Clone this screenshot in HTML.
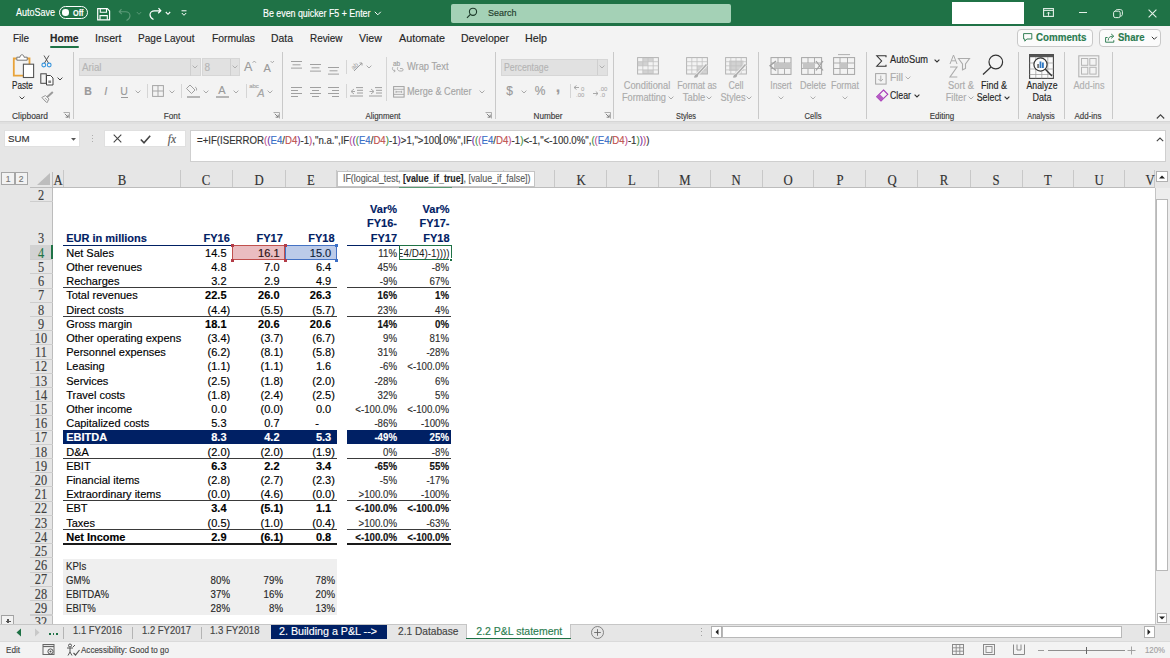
<!DOCTYPE html>
<html><head><meta charset="utf-8"><style>
html,body{margin:0;padding:0;width:1170px;height:658px;overflow:hidden;background:#fff;}
body{position:relative;font-family:'Liberation Sans', sans-serif;}
.t{position:absolute;white-space:pre;line-height:20px;height:20px;-webkit-text-stroke:0.15px currentColor;}
.b{position:absolute;box-sizing:border-box;}
.s{position:absolute;overflow:visible;}
</style></head><body>
<div class="b" style="left:0px;top:0px;width:1170px;height:26px;background:#1f7246"></div>
<div class="t" style="left:15.9px;top:2.8000000000000007px;font-size:10px;color:#ffffff;font-weight:normal;font-family:'Liberation Sans', sans-serif;transform:scaleX(0.8991);transform-origin:0 50%;">AutoSave</div>
<div class="b" style="left:59px;top:6.3px;width:29.2px;height:12.6px;border:1.2px solid #fff;border-radius:7px"></div>
<div class="b" style="left:62.4px;top:9.4px;width:6.4px;height:6.4px;border-radius:50%;background:#fff"></div>
<div class="t" style="left:73.3px;top:2.8000000000000007px;font-size:8.5px;color:#ffffff;font-weight:bold;font-family:'Liberation Sans', sans-serif;transform:scaleX(0.8550);transform-origin:0 50%;">Off</div>
<svg class="s" style="left:97px;top:7.5px;" width="14" height="13" viewBox="0 0 14 13"><path d="M0.7 0.7 H10.3 L12.6 3 V11.8 H0.7 Z" fill="none" stroke="#fff" stroke-width="1.2"/><path d="M3.3 0.7 V4.3 H9.5 V0.7" fill="none" stroke="#fff" stroke-width="1.1"/><path d="M3 11.8 V7.6 H10.3 V11.8" fill="none" stroke="#fff" stroke-width="1.1"/></svg>
<svg class="s" style="left:118px;top:7.5px;" width="14" height="13" viewBox="0 0 14 13"><path d="M3.5 1.2 L1.2 3.8 L3.8 6.2 M1.4 3.8 H7.5 C10 3.8 12 5.5 12 7.8 C12 10 10.5 11.5 8.5 12.5" fill="none" stroke="#5e9b79" stroke-width="1.1"/></svg>
<svg class="s" style="left:135.5px;top:10.5px;" width="6" height="5" viewBox="0 0 6 5"><path d="M0.8 1 L3 3.3 L5.2 1" fill="none" stroke="#5e9b79" stroke-width="0.9"/></svg>
<svg class="s" style="left:147.8px;top:7.3px;" width="14" height="13" viewBox="0 0 14 13"><path d="M10.5 1.2 L12.8 3.8 L10.2 6.2 M12.6 3.8 H6.5 C4 3.8 2 5.5 2 7.8 C2 10 3.5 11.5 5.5 12.5" fill="none" stroke="#fff" stroke-width="1.2"/></svg>
<svg class="s" style="left:164.5px;top:10.5px;" width="6" height="5" viewBox="0 0 6 5"><path d="M0.8 1 L3 3.3 L5.2 1" fill="none" stroke="#fff" stroke-width="1.1"/></svg>
<svg class="s" style="left:180.5px;top:9.5px;" width="6" height="7" viewBox="0 0 6 7"><path d="M0.5 0.8 H5.5" stroke="#fff" stroke-width="1"/><path d="M0.8 3 L3 5.3 L5.2 3" fill="none" stroke="#fff" stroke-width="1"/></svg>
<div class="t" style="left:263.4px;top:3.5px;font-size:10px;color:#ffffff;font-weight:normal;font-family:'Liberation Sans', sans-serif;transform:scaleX(0.8850);transform-origin:0 50%;">Be even quicker F5 + Enter</div>
<svg class="s" style="left:373.5px;top:11px;" width="8" height="5" viewBox="0 0 8 5"><path d="M0.8 0.8 L3.8 3.8 L6.8 0.8" fill="none" stroke="#fff" stroke-width="1"/></svg>
<div class="b" style="left:450.8px;top:3.5px;width:280.5px;height:19px;background:#a4d1b6;border-radius:2px"></div>
<svg class="s" style="left:465.5px;top:6.5px;" width="12" height="12" viewBox="0 0 12 12"><circle cx="7" cy="4.8" r="3.6" fill="none" stroke="#1e3b2b" stroke-width="1.1"/><path d="M4.4 7.4 L1 10.8" stroke="#1e3b2b" stroke-width="1.2"/></svg>
<div class="t" style="left:488.2px;top:3.4000000000000004px;font-size:9.6px;color:#1e3b2b;font-weight:normal;font-family:'Liberation Sans', sans-serif;transform:scaleX(0.9373);transform-origin:0 50%;">Search</div>
<div class="b" style="left:952.3px;top:2px;width:71.7px;height:22px;background:#fff"></div>
<svg class="s" style="left:1042.5px;top:8.2px;" width="11" height="9" viewBox="0 0 11 9"><rect x="0.6" y="0.6" width="9.8" height="7.8" fill="none" stroke="#e4f1e8" stroke-width="1.1"/><path d="M0.6 2.4 H10.4" stroke="#e4f1e8" stroke-width="1"/><path d="M5.5 7.8 V4.2 M4 5.6 L5.5 4.1 L7 5.6" fill="none" stroke="#e4f1e8" stroke-width="1"/></svg>
<div class="b" style="left:1078.5px;top:11.8px;width:8.3px;height:1.1px;background:#e4f1e8"></div>
<svg class="s" style="left:1113px;top:8.8px;" width="10" height="9" viewBox="0 0 10 9"><rect x="0.6" y="2.2" width="6.6" height="6.4" rx="1.6" fill="none" stroke="#e4f1e8" stroke-width="1"/><path d="M2.4 2.2 C2.6 1.2 3.2 0.6 4.2 0.6 H7.4 C8.6 0.6 9.4 1.4 9.4 2.6 V5.4 C9.4 6.4 8.8 7 7.4 7.2" fill="none" stroke="#e4f1e8" stroke-width="1"/></svg>
<svg class="s" style="left:1147.8px;top:8.7px;" width="9" height="9" viewBox="0 0 9 9"><path d="M0.6 0.6 L8.4 8.4 M8.4 0.6 L0.6 8.4" stroke="#e4f1e8" stroke-width="1.1"/></svg>
<div class="b" style="left:0px;top:26px;width:1170px;height:96px;background:#f3f3f3"></div>
<div class="t" style="left:12.5px;top:27.799999999999997px;font-size:10.5px;color:#262626;font-weight:normal;font-family:'Liberation Sans', sans-serif;transform:scaleX(0.9455);transform-origin:0 50%;">File</div>
<div class="t" style="left:50.2px;top:27.799999999999997px;font-size:10.5px;color:#262626;font-weight:bold;font-family:'Liberation Sans', sans-serif;transform:scaleX(0.9764);transform-origin:0 50%;">Home</div>
<div class="t" style="left:94.7px;top:27.799999999999997px;font-size:10.5px;color:#262626;font-weight:normal;font-family:'Liberation Sans', sans-serif;transform:scaleX(1.0089);transform-origin:0 50%;">Insert</div>
<div class="t" style="left:138.2px;top:27.799999999999997px;font-size:10.5px;color:#262626;font-weight:normal;font-family:'Liberation Sans', sans-serif;transform:scaleX(0.9581);transform-origin:0 50%;">Page Layout</div>
<div class="t" style="left:211.7px;top:27.799999999999997px;font-size:10.5px;color:#262626;font-weight:normal;font-family:'Liberation Sans', sans-serif;transform:scaleX(0.9825);transform-origin:0 50%;">Formulas</div>
<div class="t" style="left:270.7px;top:27.799999999999997px;font-size:10.5px;color:#262626;font-weight:normal;font-family:'Liberation Sans', sans-serif;transform:scaleX(0.9915);transform-origin:0 50%;">Data</div>
<div class="t" style="left:310.2px;top:27.799999999999997px;font-size:10.5px;color:#262626;font-weight:normal;font-family:'Liberation Sans', sans-serif;transform:scaleX(0.9437);transform-origin:0 50%;">Review</div>
<div class="t" style="left:359.4px;top:27.799999999999997px;font-size:10.5px;color:#262626;font-weight:normal;font-family:'Liberation Sans', sans-serif;transform:scaleX(1.0098);transform-origin:0 50%;">View</div>
<div class="t" style="left:398.7px;top:27.799999999999997px;font-size:10.5px;color:#262626;font-weight:normal;font-family:'Liberation Sans', sans-serif;transform:scaleX(1.0233);transform-origin:0 50%;">Automate</div>
<div class="t" style="left:460.7px;top:27.799999999999997px;font-size:10.5px;color:#262626;font-weight:normal;font-family:'Liberation Sans', sans-serif;transform:scaleX(1.0026);transform-origin:0 50%;">Developer</div>
<div class="t" style="left:524.7px;top:27.799999999999997px;font-size:10.5px;color:#262626;font-weight:normal;font-family:'Liberation Sans', sans-serif;transform:scaleX(1.0181);transform-origin:0 50%;">Help</div>
<div class="b" style="left:50px;top:45.5px;width:29px;height:2.6px;background:#1f7246;border-radius:1px"></div>
<div class="b" style="left:1017px;top:28.5px;width:76px;height:18.5px;background:#fbfbfb;border:1px solid #c8c8c8;border-radius:4px"></div>
<svg class="s" style="left:1023px;top:33px;" width="10" height="10" viewBox="0 0 10 10"><path d="M0.6 0.6 H8.8 V6 H3.8 L1.8 8.2 V6 H0.6 Z" fill="none" stroke="#2a7a4e" stroke-width="0.95"/></svg>
<div class="t" style="left:1035.7px;top:28.0px;font-size:10px;color:#2a7a4e;font-weight:bold;font-family:'Liberation Sans', sans-serif;transform:scaleX(0.9770);transform-origin:0 50%;">Comments</div>
<div class="b" style="left:1099px;top:28.5px;width:61.5px;height:18.5px;background:#fbfbfb;border:1px solid #c8c8c8;border-radius:4px"></div>
<svg class="s" style="left:1105px;top:32.5px;" width="11" height="10" viewBox="0 0 11 10"><path d="M2.6 4.5 H0.6 V9.2 H8.8 V7.2" fill="none" stroke="#2a7a4e" stroke-width="0.95"/><path d="M3.2 7.5 C3.2 4.5 5 3.2 7.8 3.2 M6.2 1 L8.8 3.2 L6.2 5.4" fill="none" stroke="#2a7a4e" stroke-width="0.95"/></svg>
<div class="t" style="left:1117.5px;top:28.0px;font-size:10px;color:#2a7a4e;font-weight:bold;font-family:'Liberation Sans', sans-serif;transform:scaleX(0.9533);transform-origin:0 50%;">Share</div>
<svg class="s" style="left:1150.5px;top:36px;" width="7" height="5" viewBox="0 0 7 5"><path d="M0.8 0.8 L3.3 3.3 L5.8 0.8" fill="none" stroke="#333" stroke-width="1"/></svg>
<div class="b" style="left:72.5px;top:52px;width:1px;height:66.5px;background:#c9c9c9"></div>
<div class="b" style="left:282.0px;top:52px;width:1px;height:66.5px;background:#c9c9c9"></div>
<div class="b" style="left:494.5px;top:52px;width:1px;height:66.5px;background:#c9c9c9"></div>
<div class="b" style="left:613.0px;top:52px;width:1px;height:66.5px;background:#c9c9c9"></div>
<div class="b" style="left:758.3px;top:52px;width:1px;height:66.5px;background:#c9c9c9"></div>
<div class="b" style="left:866.0px;top:52px;width:1px;height:66.5px;background:#c9c9c9"></div>
<div class="b" style="left:1017.7px;top:52px;width:1px;height:66.5px;background:#c9c9c9"></div>
<div class="b" style="left:1064.2px;top:52px;width:1px;height:66.5px;background:#c9c9c9"></div>
<div class="b" style="left:1111.5px;top:52px;width:1px;height:66.5px;background:#c9c9c9"></div>
<svg class="s" style="left:12px;top:54px;" width="24" height="25" viewBox="0 0 24 25"><path d="M4.5 4.5 H1.8 V21.6 H17.5 V4.5 H15" fill="none" stroke="#e8a33a" stroke-width="1.8"/><path d="M4.8 6.2 V3.2 H8 C8 1.5 9 0.8 10 0.8 C11 0.8 12 1.5 12 3.2 H15.2 V6.2 Z" fill="#fff" stroke="#777" stroke-width="1"/><rect x="11.4" y="10.2" width="10.2" height="13.3" fill="#fff" stroke="#555" stroke-width="1.1"/></svg>
<div class="t" style="left:12.1px;top:76.2px;font-size:10px;color:#262626;font-weight:normal;font-family:'Liberation Sans', sans-serif;transform:scaleX(0.8132);transform-origin:0 50%;">Paste</div>
<svg class="s" style="left:18.5px;top:95.5px;" width="6" height="4" viewBox="0 0 6 4"><path d="M0.6 0.6 L3 3 L5.4 0.6" fill="none" stroke="#444" stroke-width="1"/></svg>
<svg class="s" style="left:41px;top:54.5px;" width="11" height="13" viewBox="0 0 11 13"><path d="M3 0.5 L7.5 8 M8 0.5 L3.5 8" stroke="#444" stroke-width="0.9"/><circle cx="2.8" cy="10" r="1.9" fill="none" stroke="#3a96dd" stroke-width="1.1"/><circle cx="8.2" cy="10" r="1.9" fill="none" stroke="#3a96dd" stroke-width="1.1"/></svg>
<svg class="s" style="left:39.5px;top:72.5px;" width="15" height="13" viewBox="0 0 15 13"><rect x="0.8" y="0.8" width="5.5" height="9.5" fill="none" stroke="#444" stroke-width="1"/><path d="M6.5 2.5 H10.5 L13 5 V12 H6.5 Z" fill="#fff" stroke="#444" stroke-width="1"/><rect x="8.3" y="7.5" width="2.8" height="2.5" fill="#888"/></svg>
<svg class="s" style="left:57.2px;top:77.3px;" width="6" height="4" viewBox="0 0 6 4"><path d="M0.6 0.6 L3 3 L5.4 0.6" fill="none" stroke="#444" stroke-width="1"/></svg>
<svg class="s" style="left:40.5px;top:90.5px;" width="13" height="13" viewBox="0 0 13 13"><path d="M0.8 6.5 L4.5 4.5 L8 8 L6 11.8 Z" fill="none" stroke="#9b9b9b" stroke-width="1"/><path d="M2.5 8.5 L5 11 M4 7 L6.5 9.5" stroke="#9b9b9b" stroke-width="0.8"/><path d="M6 6.3 L11.8 1" stroke="#9b9b9b" stroke-width="2"/></svg>
<div class="t" style="left:-170.4px;width:400px;text-align:center;top:105.8px;font-size:8.8px;color:#3b3b3b;font-weight:normal;font-family:'Liberation Sans', sans-serif;transform:scaleX(0.9560);transform-origin:50% 50%;">Clipboard</div>
<svg class="s" style="left:63.0px;top:112.0px;" width="7" height="7" viewBox="0 0 7 7"><path d="M0.5 0.5 H6.5 V6.5" fill="none" stroke="#9a9a9a" stroke-width="0.8"/><path d="M1.8 1.8 L5.2 5.2 M2.6 5.2 H5.2 V2.6" fill="none" stroke="#777" stroke-width="0.9"/></svg>
<div class="b" style="left:79px;top:58px;width:121.7px;height:17.8px;background:#e1e1e1;border:0.8px solid #d6d6d6"></div>
<div class="b" style="left:190px;top:58.5px;width:0.8px;height:17px;background:#cfcfcf"></div>
<div class="t" style="left:82px;top:58.0px;font-size:10px;color:#b5b5b5;font-weight:normal;font-family:'Liberation Sans', sans-serif;transform:scaleX(0.9742);transform-origin:0 50%;">Arial</div>
<svg class="s" style="left:192.3px;top:65.2px;" width="6" height="4" viewBox="0 0 6 4"><path d="M0.6 0.6 L3 3 L5.4 0.6" fill="none" stroke="#b0b0b0" stroke-width="1"/></svg>
<div class="b" style="left:202px;top:58px;width:38px;height:17.8px;background:#e1e1e1;border:0.8px solid #d6d6d6"></div>
<div class="b" style="left:230px;top:58.5px;width:0.8px;height:17px;background:#cfcfcf"></div>
<div class="t" style="left:204.5px;top:58.0px;font-size:10px;color:#b5b5b5;font-weight:normal;font-family:'Liberation Sans', sans-serif;">8</div>
<svg class="s" style="left:232.3px;top:65.2px;" width="6" height="4" viewBox="0 0 6 4"><path d="M0.6 0.6 L3 3 L5.4 0.6" fill="none" stroke="#b0b0b0" stroke-width="1"/></svg>
<div class="t" style="left:244px;top:56.8px;font-size:12.5px;color:#9a9a9a;font-weight:normal;font-family:'Liberation Sans', sans-serif;">A</div>
<svg class="s" style="left:251.5px;top:60px;" width="5" height="4" viewBox="0 0 5 4"><path d="M0.6 2.8 L2.3 1 L4 2.8" fill="none" stroke="#9a9a9a" stroke-width="0.8"/></svg>
<div class="t" style="left:263.5px;top:57.5px;font-size:11px;color:#9a9a9a;font-weight:normal;font-family:'Liberation Sans', sans-serif;">A</div>
<svg class="s" style="left:270px;top:60px;" width="5" height="4" viewBox="0 0 5 4"><path d="M0.6 1 L2.3 2.8 L4 1" fill="none" stroke="#9a9a9a" stroke-width="0.8"/></svg>
<div class="t" style="left:-112px;width:400px;text-align:center;top:81.0px;font-size:10.5px;color:#9a9a9a;font-weight:bold;font-family:'Liberation Sans', sans-serif;">B</div>
<div class="t" style="left:-94.3px;width:400px;text-align:center;top:81.0px;font-size:11px;color:#9a9a9a;font-weight:normal;font-family:'Liberation Sans', sans-serif;font-style:italic">I</div>
<div class="t" style="left:-76px;width:400px;text-align:center;top:80.5px;font-size:10.5px;color:#9a9a9a;font-weight:normal;font-family:'Liberation Sans', sans-serif;">U</div>
<div class="b" style="left:120.5px;top:96.6px;width:7px;height:0.9px;background:#9a9a9a"></div>
<svg class="s" style="left:135.2px;top:89.5px;" width="6" height="4" viewBox="0 0 6 4"><path d="M0.6 0.6 L3 3 L5.4 0.6" fill="none" stroke="#aaa" stroke-width="1"/></svg>
<div class="b" style="left:147px;top:84px;width:0.8px;height:14px;background:#d5d5d5"></div>
<svg class="s" style="left:152px;top:85px;" width="12" height="12" viewBox="0 0 12 12"><rect x="0.6" y="0.6" width="10.8" height="10.8" fill="none" stroke="#a5a5a5" stroke-width="1"/><path d="M6 0.6 V11.4 M0.6 6 H11.4" stroke="#a5a5a5" stroke-width="1"/></svg>
<svg class="s" style="left:168.5px;top:89.5px;" width="6" height="4" viewBox="0 0 6 4"><path d="M0.6 0.6 L3 3 L5.4 0.6" fill="none" stroke="#aaa" stroke-width="1"/></svg>
<div class="b" style="left:181.2px;top:84px;width:0.8px;height:14px;background:#d5d5d5"></div>
<svg class="s" style="left:186px;top:83px;" width="14" height="14" viewBox="0 0 14 14"><path d="M4 2 L9 7 L5.5 10.5 L0.5 5.5 Z" fill="none" stroke="#a0a0a0" stroke-width="1"/><path d="M9 4 C10 4.5 11 5 10.5 7.5" fill="none" stroke="#a0a0a0" stroke-width="0.9"/></svg>
<div class="b" style="left:186.5px;top:95.5px;width:13px;height:2.4px;background:#b5b5b5"></div>
<svg class="s" style="left:202.8px;top:89.5px;" width="6" height="4" viewBox="0 0 6 4"><path d="M0.6 0.6 L3 3 L5.4 0.6" fill="none" stroke="#aaa" stroke-width="1"/></svg>
<div class="t" style="left:22px;width:400px;text-align:center;top:80.0px;font-size:11px;color:#9a9a9a;font-weight:normal;font-family:'Liberation Sans', sans-serif;">A</div>
<div class="b" style="left:215.5px;top:95.5px;width:13px;height:2.4px;background:#b5b5b5"></div>
<svg class="s" style="left:233px;top:89.5px;" width="6" height="4" viewBox="0 0 6 4"><path d="M0.6 0.6 L3 3 L5.4 0.6" fill="none" stroke="#aaa" stroke-width="1"/></svg>
<div class="b" style="left:245.5px;top:84px;width:0.8px;height:14px;background:#d5d5d5"></div>
<div class="t" style="left:54px;width:400px;text-align:center;top:76.0px;font-size:6px;color:#a5a5a5;font-weight:normal;font-family:'Liberation Sans', sans-serif;">abc</div>
<div class="t" style="left:61px;width:400px;text-align:center;top:83.0px;font-size:11px;color:#a5a5a5;font-weight:normal;font-family:'Liberation Sans', sans-serif;font-style:italic">A</div>
<svg class="s" style="left:267.3px;top:89.5px;" width="6" height="4" viewBox="0 0 6 4"><path d="M0.6 0.6 L3 3 L5.4 0.6" fill="none" stroke="#aaa" stroke-width="1"/></svg>
<div class="t" style="left:-28.5px;width:400px;text-align:center;top:105.8px;font-size:8.8px;color:#3b3b3b;font-weight:normal;font-family:'Liberation Sans', sans-serif;transform:scaleX(0.9370);transform-origin:50% 50%;">Font</div>
<svg class="s" style="left:273.0px;top:112.0px;" width="7" height="7" viewBox="0 0 7 7"><path d="M0.5 0.5 H6.5 V6.5" fill="none" stroke="#9a9a9a" stroke-width="0.8"/><path d="M1.8 1.8 L5.2 5.2 M2.6 5.2 H5.2 V2.6" fill="none" stroke="#777" stroke-width="0.9"/></svg>
<svg class="s" style="left:291px;top:61px;" width="13" height="12" viewBox="0 0 13 12"><rect x="0" y="0.0" width="11" height="1" fill="#a0a0a0"/><rect x="1.5" y="3.3" width="8" height="1" fill="#a0a0a0"/><rect x="0" y="6.6" width="11" height="1" fill="#a0a0a0"/></svg>
<svg class="s" style="left:309.5px;top:63.5px;" width="13" height="12" viewBox="0 0 13 12"><rect x="0" y="0.0" width="11" height="1" fill="#a0a0a0"/><rect x="1.5" y="3.3" width="8" height="1" fill="#a0a0a0"/><rect x="0" y="6.6" width="11" height="1" fill="#a0a0a0"/></svg>
<svg class="s" style="left:328px;top:66.5px;" width="13" height="12" viewBox="0 0 13 12"><rect x="0" y="0.0" width="11" height="1" fill="#a0a0a0"/><rect x="1.5" y="3.3" width="8" height="1" fill="#a0a0a0"/><rect x="0" y="6.6" width="11" height="1" fill="#a0a0a0"/></svg>
<svg class="s" style="left:291px;top:86.5px;" width="13" height="12" viewBox="0 0 13 12"><rect x="0" y="0" width="11" height="1" fill="#a0a0a0"/><rect x="0" y="3" width="7" height="1" fill="#a0a0a0"/><rect x="0" y="6" width="11" height="1" fill="#a0a0a0"/><rect x="0" y="9" width="7" height="1" fill="#a0a0a0"/></svg>
<svg class="s" style="left:309.5px;top:86.5px;" width="13" height="12" viewBox="0 0 13 12"><rect x="0" y="0" width="11" height="1" fill="#a0a0a0"/><rect x="2" y="3" width="7" height="1" fill="#a0a0a0"/><rect x="0" y="6" width="11" height="1" fill="#a0a0a0"/><rect x="2" y="9" width="7" height="1" fill="#a0a0a0"/></svg>
<svg class="s" style="left:328px;top:86.5px;" width="13" height="12" viewBox="0 0 13 12"><rect x="0" y="0" width="11" height="1" fill="#a0a0a0"/><rect x="4" y="3" width="7" height="1" fill="#a0a0a0"/><rect x="0" y="6" width="11" height="1" fill="#a0a0a0"/><rect x="4" y="9" width="7" height="1" fill="#a0a0a0"/></svg>
<div class="b" style="left:345.5px;top:60px;width:0.8px;height:14px;background:#d5d5d5"></div>
<div class="b" style="left:345.5px;top:84px;width:0.8px;height:14px;background:#d5d5d5"></div>
<svg class="s" style="left:350px;top:59px;" width="15" height="15" viewBox="0 0 15 15"><text x="1" y="9" font-size="6.5" fill="#a0a0a0" transform="rotate(-40 5 7)" font-family="Liberation Sans">ab</text><path d="M4 12 L12 4 M9.5 4 H12 V6.5" fill="none" stroke="#a0a0a0" stroke-width="1"/></svg>
<svg class="s" style="left:365.5px;top:65px;" width="6" height="4" viewBox="0 0 6 4"><path d="M0.6 0.6 L3 3 L5.4 0.6" fill="none" stroke="#aaa" stroke-width="1"/></svg>
<svg class="s" style="left:350px;top:86.5px;" width="14" height="11" viewBox="0 0 14 11"><path d="M4 2 L1 4.5 L4 7" fill="none" stroke="#a0a0a0" stroke-width="0.9"/><path d="M1.5 4.5 H5" stroke="#a0a0a0" stroke-width="0.9"/><path d="M6 0.6 H13 M7 3.3 H13 M7 6 H13 M0 9 H13" stroke="#a0a0a0" stroke-width="1"/></svg>
<svg class="s" style="left:368.5px;top:86.5px;" width="14" height="11" viewBox="0 0 14 11"><path d="M2 2 L5 4.5 L2 7" fill="none" stroke="#a0a0a0" stroke-width="0.9"/><path d="M0.5 4.5 H4.5" stroke="#a0a0a0" stroke-width="0.9"/><path d="M6 0.6 H13 M7 3.3 H13 M7 6 H13 M0 9 H13" stroke="#a0a0a0" stroke-width="1"/></svg>
<div class="b" style="left:386px;top:57px;width:0.8px;height:44px;background:#d5d5d5"></div>
<div class="t" style="left:393px;top:53.5px;font-size:6.5px;color:#a0a0a0;font-weight:normal;font-family:'Liberation Sans', sans-serif;">ab</div>
<svg class="s" style="left:392px;top:66px;" width="12" height="7" viewBox="0 0 12 7"><path d="M1 1 C-0.5 3 1 5 3 5 M2 3.5 L3.2 5 L2 6.3 M6 1 C4.5 3 6 5 8 5 H10 C11.5 5 11.5 2.5 10 2.5 H8" fill="none" stroke="#a0a0a0" stroke-width="0.8"/></svg>
<div class="t" style="left:407.2px;top:57.0px;font-size:10px;color:#a5a5a5;font-weight:normal;font-family:'Liberation Sans', sans-serif;transform:scaleX(0.9293);transform-origin:0 50%;">Wrap Text</div>
<svg class="s" style="left:392.5px;top:85.5px;" width="12" height="12" viewBox="0 0 12 12"><rect x="0.6" y="0.6" width="10.5" height="10.5" fill="none" stroke="#a0a0a0" stroke-width="1"/><path d="M0.6 3.3 H11.1 M0.6 8.4 H11.1 M3 5.85 H8.6 M3 4.8 L3 6.9 M8.6 4.8 V6.9" stroke="#a0a0a0" stroke-width="0.8"/></svg>
<div class="t" style="left:407.2px;top:81.5px;font-size:10px;color:#a5a5a5;font-weight:normal;font-family:'Liberation Sans', sans-serif;transform:scaleX(0.9137);transform-origin:0 50%;">Merge &amp; Center</div>
<svg class="s" style="left:479px;top:89.5px;" width="6" height="4" viewBox="0 0 6 4"><path d="M0.6 0.6 L3 3 L5.4 0.6" fill="none" stroke="#aaa" stroke-width="1"/></svg>
<div class="t" style="left:182.5px;width:400px;text-align:center;top:105.8px;font-size:8.8px;color:#3b3b3b;font-weight:normal;font-family:'Liberation Sans', sans-serif;transform:scaleX(0.8946);transform-origin:50% 50%;">Alignment</div>
<svg class="s" style="left:484.5px;top:112.0px;" width="7" height="7" viewBox="0 0 7 7"><path d="M0.5 0.5 H6.5 V6.5" fill="none" stroke="#9a9a9a" stroke-width="0.8"/><path d="M1.8 1.8 L5.2 5.2 M2.6 5.2 H5.2 V2.6" fill="none" stroke="#777" stroke-width="0.9"/></svg>
<div class="b" style="left:501px;top:58.5px;width:106.7px;height:17px;background:#e1e1e1;border:0.8px solid #d6d6d6"></div>
<div class="b" style="left:597px;top:59px;width:0.8px;height:16px;background:#cfcfcf"></div>
<div class="t" style="left:503.8px;top:58.0px;font-size:10px;color:#b5b5b5;font-weight:normal;font-family:'Liberation Sans', sans-serif;transform:scaleX(0.8699);transform-origin:0 50%;">Percentage</div>
<svg class="s" style="left:599.3px;top:65.2px;" width="6" height="4" viewBox="0 0 6 4"><path d="M0.6 0.6 L3 3 L5.4 0.6" fill="none" stroke="#b0b0b0" stroke-width="1"/></svg>
<div class="t" style="left:309.6px;width:400px;text-align:center;top:81.0px;font-size:12px;color:#9a9a9a;font-weight:normal;font-family:'Liberation Sans', sans-serif;">$</div>
<svg class="s" style="left:520.5px;top:89.5px;" width="6" height="4" viewBox="0 0 6 4"><path d="M0.6 0.6 L3 3 L5.4 0.6" fill="none" stroke="#aaa" stroke-width="1"/></svg>
<div class="t" style="left:340px;width:400px;text-align:center;top:81.0px;font-size:12px;color:#9a9a9a;font-weight:normal;font-family:'Liberation Sans', sans-serif;">%</div>
<div class="t" style="left:358px;width:400px;text-align:center;top:76.5px;font-size:16px;color:#9a9a9a;font-weight:bold;font-family:'Liberation Sans', sans-serif;">,</div>
<div class="b" style="left:569.6px;top:84px;width:0.8px;height:14px;background:#d5d5d5"></div>
<svg class="s" style="left:573px;top:84px;" width="14" height="14" viewBox="0 0 14 14"><path d="M3.5 1.5 L1 3.5 L3.5 5.5 M1.3 3.5 H6" fill="none" stroke="#a0a0a0" stroke-width="0.9"/><text x="8" y="6.5" font-size="6" fill="#a0a0a0" font-family="Liberation Sans">0</text><text x="3" y="12.5" font-size="6" fill="#a0a0a0" font-family="Liberation Sans">.00</text></svg>
<svg class="s" style="left:592px;top:84px;" width="14" height="14" viewBox="0 0 14 14"><text x="7" y="6.5" font-size="6" fill="#a0a0a0" font-family="Liberation Sans">.00</text><path d="M1 9.5 H6 M3.8 7.5 L6 9.5 L3.8 11.5" fill="none" stroke="#a0a0a0" stroke-width="0.9"/><text x="8" y="12.5" font-size="6" fill="#a0a0a0" font-family="Liberation Sans">.0</text></svg>
<div class="t" style="left:347.70000000000005px;width:400px;text-align:center;top:106.0px;font-size:8.8px;color:#3b3b3b;font-weight:normal;font-family:'Liberation Sans', sans-serif;transform:scaleX(0.9266);transform-origin:50% 50%;">Number</div>
<svg class="s" style="left:603.5px;top:112.0px;" width="7" height="7" viewBox="0 0 7 7"><path d="M0.5 0.5 H6.5 V6.5" fill="none" stroke="#9a9a9a" stroke-width="0.8"/><path d="M1.8 1.8 L5.2 5.2 M2.6 5.2 H5.2 V2.6" fill="none" stroke="#777" stroke-width="0.9"/></svg>
<svg class="s" style="left:637px;top:57px;" width="24" height="21" viewBox="0 0 24 21"><rect x="5.8" y="0.6" width="10.4" height="4.1" fill="#d2d2d2"/><rect x="1" y="4.7" width="10" height="4.1" fill="#d2d2d2"/><rect x="5.8" y="12.9" width="10.4" height="4.1" fill="#d2d2d2"/><rect x="0.6" y="0.6" width="20.8" height="16.4" fill="none" stroke="#b3b3b3" stroke-width="1"/><path d="M0.6 4.7 H21.4 M0.6 8.8 H21.4 M0.6 12.9 H21.4 M5.8 0.6 V17 M11 0.6 V17 M16.2 0.6 V17" stroke="#c2c2c2" stroke-width="0.8"/></svg>
<svg class="s" style="left:686px;top:57px;" width="24" height="21" viewBox="0 0 24 21"><rect x="11" y="8.8" width="10.4" height="8.2" fill="#d2d2d2"/><rect x="0.6" y="0.6" width="20.8" height="16.4" fill="none" stroke="#b3b3b3" stroke-width="1"/><path d="M0.6 4.7 H21.4 M0.6 8.8 H21.4 M0.6 12.9 H21.4 M5.8 0.6 V17 M11 0.6 V17 M16.2 0.6 V17" stroke="#c2c2c2" stroke-width="0.8"/><path d="M10.5 18.5 L20.5 7.5" stroke="#f3f3f3" stroke-width="3"/><path d="M10.5 18.5 L20.5 7.5" stroke="#adadad" stroke-width="1.6"/><path d="M8 20.6 C8.3 18.5 9.5 17 11.2 17.3 L12.2 18.4 C12 20 10 21 8 20.6 Z" fill="#adadad"/></svg>
<svg class="s" style="left:725px;top:57px;" width="24" height="21" viewBox="0 0 24 21"><rect x="4" y="3.5" width="14.5" height="10.5" fill="#d2d2d2"/><rect x="0.6" y="0.6" width="20.8" height="16.4" fill="none" stroke="#b3b3b3" stroke-width="1"/><path d="M0.6 4.7 H21.4 M0.6 8.8 H21.4 M0.6 12.9 H21.4 M5.8 0.6 V17 M11 0.6 V17 M16.2 0.6 V17" stroke="#c2c2c2" stroke-width="0.8"/><path d="M10.5 18.5 L20.5 7.5" stroke="#f3f3f3" stroke-width="3"/><path d="M10.5 18.5 L20.5 7.5" stroke="#adadad" stroke-width="1.6"/><path d="M8 20.6 C8.3 18.5 9.5 17 11.2 17.3 L12.2 18.4 C12 20 10 21 8 20.6 Z" fill="#adadad"/></svg>
<div class="t" style="left:447.20000000000005px;width:400px;text-align:center;top:75.8px;font-size:10px;color:#ababab;font-weight:normal;font-family:'Liberation Sans', sans-serif;transform:scaleX(0.9291);transform-origin:50% 50%;">Conditional</div>
<div class="t" style="left:443.79999999999995px;width:400px;text-align:center;top:88.2px;font-size:10px;color:#ababab;font-weight:normal;font-family:'Liberation Sans', sans-serif;transform:scaleX(0.9206);transform-origin:50% 50%;">Formatting</div>
<svg class="s" style="left:667.8px;top:95.6px;" width="6" height="4" viewBox="0 0 6 4"><path d="M0.6 0.6 L3 3 L5.4 0.6" fill="none" stroke="#aaa" stroke-width="1"/></svg>
<div class="t" style="left:496.70000000000005px;width:400px;text-align:center;top:75.8px;font-size:10px;color:#ababab;font-weight:normal;font-family:'Liberation Sans', sans-serif;transform:scaleX(0.8775);transform-origin:50% 50%;">Format as</div>
<div class="t" style="left:493.79999999999995px;width:400px;text-align:center;top:88.2px;font-size:10px;color:#ababab;font-weight:normal;font-family:'Liberation Sans', sans-serif;transform:scaleX(0.9412);transform-origin:50% 50%;">Table</div>
<svg class="s" style="left:706px;top:95.6px;" width="6" height="4" viewBox="0 0 6 4"><path d="M0.6 0.6 L3 3 L5.4 0.6" fill="none" stroke="#aaa" stroke-width="1"/></svg>
<div class="t" style="left:536px;width:400px;text-align:center;top:75.8px;font-size:10px;color:#ababab;font-weight:normal;font-family:'Liberation Sans', sans-serif;transform:scaleX(0.8704);transform-origin:50% 50%;">Cell</div>
<div class="t" style="left:532.5px;width:400px;text-align:center;top:88.2px;font-size:10px;color:#ababab;font-weight:normal;font-family:'Liberation Sans', sans-serif;transform:scaleX(0.9180);transform-origin:50% 50%;">Styles</div>
<svg class="s" style="left:745.8px;top:95.6px;" width="6" height="4" viewBox="0 0 6 4"><path d="M0.6 0.6 L3 3 L5.4 0.6" fill="none" stroke="#aaa" stroke-width="1"/></svg>
<div class="t" style="left:485.70000000000005px;width:400px;text-align:center;top:106.0px;font-size:8.8px;color:#3b3b3b;font-weight:normal;font-family:'Liberation Sans', sans-serif;transform:scaleX(0.8344);transform-origin:50% 50%;">Styles</div>
<svg class="s" style="left:769px;top:57px;" width="24" height="18" viewBox="0 0 24 18"><rect x="2" y="0.6" width="20" height="16.8" fill="none" stroke="#a6a6a6"/><path d="M2 6 H22 M2 11.5 H22 M9 0.6 V17 M15.5 0.6 V17" stroke="#a6a6a6" stroke-width="0.9"/><rect x="5" y="6" width="17" height="5.5" fill="#c4c4c4"/><path d="M7 4 L1 8.7 L7 13.5" fill="none" stroke="#a0a0a0" stroke-width="1.3"/></svg>
<svg class="s" style="left:800.5px;top:57px;" width="24" height="18" viewBox="0 0 24 18"><rect x="0.6" y="0.6" width="20" height="16.8" fill="none" stroke="#a6a6a6"/><path d="M0.6 6 H20.6 M0.6 11.5 H20.6 M7 0.6 V17 M13.5 0.6 V17" stroke="#a6a6a6" stroke-width="0.9"/><rect x="2" y="6" width="12" height="5.5" fill="#c4c4c4"/><path d="M15 4 L22 13.5 M22 4 L15 13.5" stroke="#a0a0a0" stroke-width="1.2"/></svg>
<svg class="s" style="left:833px;top:54px;" width="23" height="21" viewBox="0 0 23 21"><path d="M5 0.6 H17" stroke="#a6a6a6" stroke-width="0.9"/><rect x="0.6" y="3.6" width="21" height="16.8" fill="none" stroke="#a6a6a6"/><path d="M0.6 9 H21.6 M0.6 14.5 H21.6 M7 3.6 V20 M14.5 3.6 V20" stroke="#a6a6a6" stroke-width="0.9"/><rect x="7" y="9" width="7.5" height="5.5" fill="#c4c4c4"/></svg>
<div class="t" style="left:581px;width:400px;text-align:center;top:75.8px;font-size:10px;color:#ababab;font-weight:normal;font-family:'Liberation Sans', sans-serif;transform:scaleX(0.8595);transform-origin:50% 50%;">Insert</div>
<div class="t" style="left:612.5px;width:400px;text-align:center;top:75.8px;font-size:10px;color:#ababab;font-weight:normal;font-family:'Liberation Sans', sans-serif;transform:scaleX(0.8995);transform-origin:50% 50%;">Delete</div>
<div class="t" style="left:644.5px;width:400px;text-align:center;top:75.8px;font-size:10px;color:#ababab;font-weight:normal;font-family:'Liberation Sans', sans-serif;transform:scaleX(0.8841);transform-origin:50% 50%;">Format</div>
<svg class="s" style="left:778px;top:95.5px;" width="6" height="4" viewBox="0 0 6 4"><path d="M0.6 0.6 L3 3 L5.4 0.6" fill="none" stroke="#b0b0b0" stroke-width="1"/></svg>
<svg class="s" style="left:809.5px;top:95.5px;" width="6" height="4" viewBox="0 0 6 4"><path d="M0.6 0.6 L3 3 L5.4 0.6" fill="none" stroke="#b0b0b0" stroke-width="1"/></svg>
<svg class="s" style="left:841.5px;top:95.5px;" width="6" height="4" viewBox="0 0 6 4"><path d="M0.6 0.6 L3 3 L5.4 0.6" fill="none" stroke="#b0b0b0" stroke-width="1"/></svg>
<div class="t" style="left:612.5px;width:400px;text-align:center;top:106.0px;font-size:8.8px;color:#3b3b3b;font-weight:normal;font-family:'Liberation Sans', sans-serif;transform:scaleX(0.8690);transform-origin:50% 50%;">Cells</div>
<svg class="s" style="left:875.5px;top:54.5px;" width="11" height="12" viewBox="0 0 11 12"><path d="M10 2.2 V0.8 H0.8 L5.6 6 L0.8 11.2 H10 V9.8" fill="none" stroke="#333" stroke-width="1.1"/></svg>
<div class="t" style="left:889.6px;top:50.3px;font-size:10px;color:#262626;font-weight:normal;font-family:'Liberation Sans', sans-serif;transform:scaleX(0.9237);transform-origin:0 50%;">AutoSum</div>
<svg class="s" style="left:934px;top:58.5px;" width="6" height="4" viewBox="0 0 6 4"><path d="M0.6 0.6 L3 3 L5.4 0.6" fill="none" stroke="#333" stroke-width="1.1"/></svg>
<svg class="s" style="left:875px;top:72.5px;" width="12" height="12" viewBox="0 0 12 12"><rect x="0.6" y="0.6" width="10.5" height="10.5" fill="none" stroke="#a6a6a6"/><path d="M5.8 2.5 V8 M3.5 6 L5.8 8.3 L8 6" fill="none" stroke="#a6a6a6" stroke-width="0.9"/></svg>
<div class="t" style="left:889.6px;top:68.3px;font-size:10px;color:#ababab;font-weight:normal;font-family:'Liberation Sans', sans-serif;transform:scaleX(1.0171);transform-origin:0 50%;">Fill</div>
<svg class="s" style="left:905px;top:76px;" width="6" height="4" viewBox="0 0 6 4"><path d="M0.6 0.6 L3 3 L5.4 0.6" fill="none" stroke="#b0b0b0" stroke-width="1"/></svg>
<svg class="s" style="left:874.5px;top:89px;" width="14" height="13" viewBox="0 0 14 13"><path d="M8.5 1 L12.8 5.3 L6 12 L1.7 7.8 Z" fill="none" stroke="#a83ab8" stroke-width="1.1"/><path d="M4.6 4.9 L8.9 9.2 L6 12 L1.7 7.8 Z" fill="#b55bc4"/></svg>
<div class="t" style="left:889.6px;top:85.8px;font-size:10px;color:#262626;font-weight:normal;font-family:'Liberation Sans', sans-serif;transform:scaleX(0.8784);transform-origin:0 50%;">Clear</div>
<svg class="s" style="left:914px;top:94px;" width="6" height="4" viewBox="0 0 6 4"><path d="M0.6 0.6 L3 3 L5.4 0.6" fill="none" stroke="#333" stroke-width="1.1"/></svg>
<svg class="s" style="left:949px;top:54px;" width="22" height="24" viewBox="0 0 22 24"><path d="M1 10 L4.5 1 L8 10 M2.3 6.8 H6.7" fill="none" stroke="#ababab" stroke-width="1"/><path d="M1 13 H8 L1 23 H8.3" fill="none" stroke="#ababab" stroke-width="1.1"/><path d="M9.5 4.5 H20.5 L16.5 10 V14.5 L13.5 15.8 V10 Z" fill="none" stroke="#ababab" stroke-width="1.1"/></svg>
<div class="t" style="left:760.5px;width:400px;text-align:center;top:75.8px;font-size:10px;color:#ababab;font-weight:normal;font-family:'Liberation Sans', sans-serif;transform:scaleX(0.9354);transform-origin:50% 50%;">Sort &amp;</div>
<div class="t" style="left:755.7px;width:400px;text-align:center;top:88.2px;font-size:10px;color:#ababab;font-weight:normal;font-family:'Liberation Sans', sans-serif;transform:scaleX(0.9220);transform-origin:50% 50%;">Filter</div>
<svg class="s" style="left:968px;top:96px;" width="6" height="4" viewBox="0 0 6 4"><path d="M0.6 0.6 L3 3 L5.4 0.6" fill="none" stroke="#aaa" stroke-width="1"/></svg>
<svg class="s" style="left:982px;top:54px;" width="22" height="22" viewBox="0 0 22 22"><circle cx="13.8" cy="8" r="6.8" fill="none" stroke="#333" stroke-width="1.2"/><path d="M9 13 L1 20.5" stroke="#333" stroke-width="1.2"/></svg>
<div class="t" style="left:793.7px;width:400px;text-align:center;top:75.8px;font-size:10px;color:#262626;font-weight:normal;font-family:'Liberation Sans', sans-serif;transform:scaleX(0.8995);transform-origin:50% 50%;">Find &amp;</div>
<div class="t" style="left:789.4px;width:400px;text-align:center;top:88.2px;font-size:10px;color:#262626;font-weight:normal;font-family:'Liberation Sans', sans-serif;transform:scaleX(0.8814);transform-origin:50% 50%;">Select</div>
<svg class="s" style="left:1004px;top:96px;" width="6" height="4" viewBox="0 0 6 4"><path d="M0.6 0.6 L3 3 L5.4 0.6" fill="none" stroke="#333" stroke-width="1.1"/></svg>
<div class="t" style="left:742px;width:400px;text-align:center;top:106.0px;font-size:8.8px;color:#3b3b3b;font-weight:normal;font-family:'Liberation Sans', sans-serif;transform:scaleX(0.9106);transform-origin:50% 50%;">Editing</div>
<svg class="s" style="left:1029px;top:53.5px;" width="25" height="25" viewBox="0 0 25 25"><rect x="0.6" y="0.6" width="23.8" height="23.8" fill="#fbfbfb" stroke="#444" stroke-width="1.1"/><rect x="0.6" y="0.6" width="23.8" height="2.6" fill="#555"/><path d="M0.6 9 H24.4 M0.6 15 H24.4 M0.6 20.5 H24.4 M6.8 3 V24.4 M12.8 3 V24.4 M18.8 3 V24.4" stroke="#9a9a9a" stroke-width="0.7"/><circle cx="11.5" cy="10.5" r="6.6" fill="#fbfbfb" stroke="#333" stroke-width="1.2"/><path d="M16.3 15.3 L23 22" stroke="#333" stroke-width="1.4"/><rect x="8.2" y="10" width="1.8" height="4" fill="#777"/><rect x="10.6" y="7.5" width="1.8" height="6.5" fill="#2f78c4"/><rect x="13" y="8.5" width="1.8" height="5.5" fill="#2f78c4"/></svg>
<div class="t" style="left:841.5px;width:400px;text-align:center;top:75.8px;font-size:10px;color:#262626;font-weight:normal;font-family:'Liberation Sans', sans-serif;transform:scaleX(0.8713);transform-origin:50% 50%;">Analyze</div>
<div class="t" style="left:841.5px;width:400px;text-align:center;top:88.2px;font-size:10px;color:#262626;font-weight:normal;font-family:'Liberation Sans', sans-serif;transform:scaleX(0.8994);transform-origin:50% 50%;">Data</div>
<div class="t" style="left:841.3px;width:400px;text-align:center;top:106.0px;font-size:8.8px;color:#3b3b3b;font-weight:normal;font-family:'Liberation Sans', sans-serif;transform:scaleX(0.8393);transform-origin:50% 50%;">Analysis</div>
<svg class="s" style="left:1077.5px;top:54.5px;" width="22" height="23" viewBox="0 0 22 23"><rect x="0.8" y="0.8" width="20" height="21" fill="none" stroke="#b5b5b5" stroke-width="1.1"/><rect x="3.5" y="3.5" width="6.3" height="6.8" fill="none" stroke="#b5b5b5"/><rect x="11.8" y="3.5" width="6.3" height="6.8" fill="none" stroke="#b5b5b5"/><rect x="3.5" y="12.3" width="6.3" height="6.8" fill="none" stroke="#b5b5b5"/><rect x="11.8" y="12.3" width="6.3" height="6.8" fill="none" stroke="#b5b5b5"/></svg>
<div class="t" style="left:888.5px;width:400px;text-align:center;top:75.8px;font-size:10px;color:#b0b0b0;font-weight:normal;font-family:'Liberation Sans', sans-serif;transform:scaleX(0.9143);transform-origin:50% 50%;">Add-ins</div>
<div class="t" style="left:888.3px;width:400px;text-align:center;top:106.0px;font-size:8.8px;color:#3b3b3b;font-weight:normal;font-family:'Liberation Sans', sans-serif;transform:scaleX(0.9052);transform-origin:50% 50%;">Add-ins</div>
<svg class="s" style="left:1156px;top:114px;" width="9" height="6" viewBox="0 0 9 6"><path d="M0.8 4.5 L4.5 0.8 L8.2 4.5" fill="none" stroke="#444" stroke-width="1.1"/></svg>
<div class="b" style="left:0px;top:121.2px;width:1170px;height:1.2px;background:#d6d6d6"></div>
<div class="b" style="left:0px;top:122.4px;width:1170px;height:1.5px;background:#e0e0e0"></div>
<div class="b" style="left:0px;top:123.9px;width:1170px;height:48.5px;background:#e6e6e6"></div>
<div class="b" style="left:4px;top:130px;width:76px;height:17.3px;background:#fff;border:0.8px solid #e0e0e0"></div>
<div class="t" style="left:7.5px;top:128.7px;font-size:9.6px;color:#333;font-weight:normal;font-family:'Liberation Sans', sans-serif;transform:scaleX(1.0081);transform-origin:0 50%;">SUM</div>
<svg class="s" style="left:70.5px;top:137.5px;" width="5" height="3" viewBox="0 0 5 3"><path d="M0 0 H5 L2.5 2.8 Z" fill="#555"/></svg>
<div class="b" style="left:91.7px;top:134.5px;width:1.2px;height:1.2px;background:#9a9a9a;border-radius:50%"></div>
<div class="b" style="left:91.7px;top:137.7px;width:1.2px;height:1.2px;background:#9a9a9a;border-radius:50%"></div>
<div class="b" style="left:91.7px;top:140.9px;width:1.2px;height:1.2px;background:#9a9a9a;border-radius:50%"></div>
<div class="b" style="left:104px;top:130px;width:82px;height:17.3px;background:#fff;border:0.8px solid #e0e0e0"></div>
<svg class="s" style="left:112.5px;top:134px;" width="9" height="9" viewBox="0 0 9 9"><path d="M0.7 0.7 L8.3 8.3 M8.3 0.7 L0.7 8.3" stroke="#444" stroke-width="1.1"/></svg>
<svg class="s" style="left:139.5px;top:134.5px;" width="11" height="9" viewBox="0 0 11 9"><path d="M0.8 4.5 L4 7.8 L10.2 0.8" fill="none" stroke="#444" stroke-width="1.6"/></svg>
<div class="t" style="left:-28px;width:400px;text-align:center;top:128.5px;font-size:11.5px;color:#555;font-weight:normal;font-family:'Liberation Serif', serif;font-style:italic">fx</div>
<div class="b" style="left:189.5px;top:129.7px;width:976.5px;height:32.8px;background:#fff;border:0.8px solid #cfcfcf"></div>
<div class="t" style="left:197.4px;top:130.9px;font-size:10.3px;color:#333;transform:scaleX(0.937);transform-origin:0 50%"><span style="color:#333">=+IF(ISERROR</span><span style="color:#c0508a">(</span><span style="color:#7030a0">(</span><span style="color:#3a6fc7">E4</span><span style="color:#333">/</span><span style="color:#c0504d">D4</span><span style="color:#7030a0">)</span><span style="color:#333">-1</span><span style="color:#c0508a">)</span><span style="color:#333">,&quot;n.a.&quot;,IF</span><span style="color:#c0508a">(</span><span style="color:#7030a0">(</span><span style="color:#3f8f3f">(</span><span style="color:#3a6fc7">E4</span><span style="color:#333">/</span><span style="color:#c0504d">D4</span><span style="color:#3f8f3f">)</span><span style="color:#333">-1</span><span style="color:#7030a0">)</span><span style="color:#333">&gt;1,&quot;&gt;100</span><span style="display:inline-block;width:0;border-left:1px solid #000;height:11px;vertical-align:-1px"></span><span style="color:#333">.0%&quot;,IF</span><span style="color:#7030a0">(</span><span style="color:#3f8f3f">(</span><span style="color:#c0508a">(</span><span style="color:#3a6fc7">E4</span><span style="color:#333">/</span><span style="color:#c0504d">D4</span><span style="color:#c0508a">)</span><span style="color:#333">-1</span><span style="color:#3f8f3f">)</span><span style="color:#333">&lt;-1,&quot;&lt;-100.0%&quot;,</span><span style="color:#3f8f3f">(</span><span style="color:#c0508a">(</span><span style="color:#3a6fc7">E4</span><span style="color:#333">/</span><span style="color:#c0504d">D4</span><span style="color:#c0508a">)</span><span style="color:#333">-1</span><span style="color:#3f8f3f">)</span><span style="color:#7030a0">)</span><span style="color:#c0508a">)</span><span style="color:#333">)</span></div>
<svg class="s" style="left:1156px;top:136.5px;" width="8" height="5" viewBox="0 0 8 5"><path d="M0.8 4.2 L4 1 L7.2 4.2" fill="none" stroke="#444" stroke-width="1.1"/></svg>
<div class="b" style="left:0px;top:172px;width:1170px;height:452px;background:#e6e6e6"></div>
<div class="b" style="left:52.7px;top:187.5px;width:1102px;height:436px;background:#fff"></div>
<div class="b" style="left:62.8px;top:170px;width:1px;height:17px;background:#c8c8c8"></div>
<div class="t" style="left:-142.0px;width:400px;text-align:center;top:170.2px;font-size:14.5px;color:#333;font-weight:normal;font-family:'Liberation Serif', serif;transform:scaleX(0.88);transform-origin:50% 50%">A</div>
<div class="b" style="left:179.5px;top:170px;width:1px;height:17px;background:#c8c8c8"></div>
<div class="t" style="left:-78.35px;width:400px;text-align:center;top:170.2px;font-size:14.5px;color:#333;font-weight:normal;font-family:'Liberation Serif', serif;transform:scaleX(0.88);transform-origin:50% 50%">B</div>
<div class="b" style="left:231.5px;top:170px;width:1px;height:17px;background:#c8c8c8"></div>
<div class="t" style="left:6.0px;width:400px;text-align:center;top:170.2px;font-size:14.5px;color:#333;font-weight:normal;font-family:'Liberation Serif', serif;transform:scaleX(0.88);transform-origin:50% 50%">C</div>
<div class="b" style="left:284.5px;top:170px;width:1px;height:17px;background:#c8c8c8"></div>
<div class="t" style="left:58.5px;width:400px;text-align:center;top:170.2px;font-size:14.5px;color:#333;font-weight:normal;font-family:'Liberation Serif', serif;transform:scaleX(0.88);transform-origin:50% 50%">D</div>
<div class="b" style="left:336.2px;top:170px;width:1px;height:17px;background:#c8c8c8"></div>
<div class="t" style="left:110.85000000000002px;width:400px;text-align:center;top:170.2px;font-size:14.5px;color:#333;font-weight:normal;font-family:'Liberation Serif', serif;transform:scaleX(0.88);transform-origin:50% 50%">E</div>
<div class="b" style="left:346.8px;top:170px;width:1px;height:17px;background:#c8c8c8"></div>
<div class="b" style="left:398.5px;top:170px;width:1px;height:17px;background:#c8c8c8"></div>
<div class="b" style="left:451.0px;top:170px;width:1px;height:17px;background:#c8c8c8"></div>
<div class="b" style="left:502.5px;top:170px;width:1px;height:17px;background:#c8c8c8"></div>
<div class="b" style="left:554.2px;top:170px;width:1px;height:17px;background:#c8c8c8"></div>
<div class="b" style="left:605.8px;top:170px;width:1px;height:17px;background:#c8c8c8"></div>
<div class="t" style="left:380.5px;width:400px;text-align:center;top:170.2px;font-size:14.5px;color:#333;font-weight:normal;font-family:'Liberation Serif', serif;transform:scaleX(0.88);transform-origin:50% 50%">K</div>
<div class="b" style="left:658.0px;top:170px;width:1px;height:17px;background:#c8c8c8"></div>
<div class="t" style="left:432.4px;width:400px;text-align:center;top:170.2px;font-size:14.5px;color:#333;font-weight:normal;font-family:'Liberation Serif', serif;transform:scaleX(0.88);transform-origin:50% 50%">L</div>
<div class="b" style="left:710.0px;top:170px;width:1px;height:17px;background:#c8c8c8"></div>
<div class="t" style="left:484.5px;width:400px;text-align:center;top:170.2px;font-size:14.5px;color:#333;font-weight:normal;font-family:'Liberation Serif', serif;transform:scaleX(0.88);transform-origin:50% 50%">M</div>
<div class="b" style="left:761.7px;top:170px;width:1px;height:17px;background:#c8c8c8"></div>
<div class="t" style="left:536.35px;width:400px;text-align:center;top:170.2px;font-size:14.5px;color:#333;font-weight:normal;font-family:'Liberation Serif', serif;transform:scaleX(0.88);transform-origin:50% 50%">N</div>
<div class="b" style="left:813.3px;top:170px;width:1px;height:17px;background:#c8c8c8"></div>
<div class="t" style="left:588.0px;width:400px;text-align:center;top:170.2px;font-size:14.5px;color:#333;font-weight:normal;font-family:'Liberation Serif', serif;transform:scaleX(0.88);transform-origin:50% 50%">O</div>
<div class="b" style="left:865.2px;top:170px;width:1px;height:17px;background:#c8c8c8"></div>
<div class="t" style="left:639.75px;width:400px;text-align:center;top:170.2px;font-size:14.5px;color:#333;font-weight:normal;font-family:'Liberation Serif', serif;transform:scaleX(0.88);transform-origin:50% 50%">P</div>
<div class="b" style="left:917.2px;top:170px;width:1px;height:17px;background:#c8c8c8"></div>
<div class="t" style="left:691.7px;width:400px;text-align:center;top:170.2px;font-size:14.5px;color:#333;font-weight:normal;font-family:'Liberation Serif', serif;transform:scaleX(0.88);transform-origin:50% 50%">Q</div>
<div class="b" style="left:969.5px;top:170px;width:1px;height:17px;background:#c8c8c8"></div>
<div class="t" style="left:743.85px;width:400px;text-align:center;top:170.2px;font-size:14.5px;color:#333;font-weight:normal;font-family:'Liberation Serif', serif;transform:scaleX(0.88);transform-origin:50% 50%">R</div>
<div class="b" style="left:1021.5px;top:170px;width:1px;height:17px;background:#c8c8c8"></div>
<div class="t" style="left:796.0px;width:400px;text-align:center;top:170.2px;font-size:14.5px;color:#333;font-weight:normal;font-family:'Liberation Serif', serif;transform:scaleX(0.88);transform-origin:50% 50%">S</div>
<div class="b" style="left:1072.5px;top:170px;width:1px;height:17px;background:#c8c8c8"></div>
<div class="t" style="left:847.5px;width:400px;text-align:center;top:170.2px;font-size:14.5px;color:#333;font-weight:normal;font-family:'Liberation Serif', serif;transform:scaleX(0.88);transform-origin:50% 50%">T</div>
<div class="b" style="left:1124.0px;top:170px;width:1px;height:17px;background:#c8c8c8"></div>
<div class="t" style="left:898.75px;width:400px;text-align:center;top:170.2px;font-size:14.5px;color:#333;font-weight:normal;font-family:'Liberation Serif', serif;transform:scaleX(0.88);transform-origin:50% 50%">U</div>
<div class="b" style="left:1154.1px;top:170px;width:1px;height:17px;background:#c8c8c8"></div>
<div class="t" style="left:950.25px;width:400px;text-align:center;top:170.2px;font-size:14.5px;color:#333;font-weight:normal;font-family:'Liberation Serif', serif;transform:scaleX(0.88);transform-origin:50% 50%">V</div>
<div class="b" style="left:30px;top:187px;width:1124.6px;height:1px;background:#bcbcbc"></div>
<div class="b" style="left:52px;top:172px;width:1px;height:452px;background:#bcbcbc"></div>
<svg class="s" style="left:37px;top:173px;" width="14" height="13" viewBox="0 0 14 13"><path d="M13 0 L13 12 L0 12 Z" fill="#bdbdbd"/></svg>
<div class="b" style="left:1.4px;top:172px;width:13.2px;height:13px;background:#f2f2f2;border:1px solid #a6a6a6"></div>
<div class="b" style="left:14.5px;top:172px;width:13.2px;height:13px;background:#f2f2f2;border:1px solid #a6a6a6"></div>
<div class="t" style="left:-192px;width:400px;text-align:center;top:169.0px;font-size:8.5px;color:#777;font-weight:normal;font-family:'Liberation Sans', sans-serif;">1</div>
<div class="t" style="left:-178.8px;width:400px;text-align:center;top:169.0px;font-size:8.5px;color:#777;font-weight:normal;font-family:'Liberation Sans', sans-serif;">2</div>
<div class="b" style="left:30px;top:200.5px;width:22.5px;height:1px;background:#cdcdcd"></div>
<div class="t" style="left:-159px;width:400px;text-align:center;top:184.55px;font-size:14.5px;color:#404040;font-weight:normal;font-family:'Liberation Serif', serif;transform:scaleX(0.85);transform-origin:50% 50%">2</div>
<div class="b" style="left:30px;top:244.9px;width:22.5px;height:1px;background:#cdcdcd"></div>
<div class="t" style="left:-159px;width:400px;text-align:center;top:228.20000000000002px;font-size:14.5px;color:#404040;font-weight:normal;font-family:'Liberation Serif', serif;transform:scaleX(0.85);transform-origin:50% 50%">3</div>
<div class="b" style="left:30px;top:245.4px;width:22.7px;height:14.2px;background:#d2d2d2"></div>
<div class="b" style="left:50.7px;top:245.4px;width:2px;height:14.2px;background:#1f7246"></div>
<div class="b" style="left:30px;top:259.1px;width:22.5px;height:1px;background:#cdcdcd"></div>
<div class="t" style="left:-159px;width:400px;text-align:center;top:242.8px;font-size:14.5px;color:#217346;font-weight:normal;font-family:'Liberation Serif', serif;transform:scaleX(0.85);transform-origin:50% 50%">4</div>
<div class="b" style="left:30px;top:273.3px;width:22.5px;height:1px;background:#cdcdcd"></div>
<div class="t" style="left:-159px;width:400px;text-align:center;top:257.00000000000006px;font-size:14.5px;color:#404040;font-weight:normal;font-family:'Liberation Serif', serif;transform:scaleX(0.85);transform-origin:50% 50%">5</div>
<div class="b" style="left:30px;top:287.5px;width:22.5px;height:1px;background:#cdcdcd"></div>
<div class="t" style="left:-159px;width:400px;text-align:center;top:271.2px;font-size:14.5px;color:#404040;font-weight:normal;font-family:'Liberation Serif', serif;transform:scaleX(0.85);transform-origin:50% 50%">6</div>
<div class="b" style="left:30px;top:301.7px;width:22.5px;height:1px;background:#cdcdcd"></div>
<div class="t" style="left:-159px;width:400px;text-align:center;top:285.40000000000003px;font-size:14.5px;color:#404040;font-weight:normal;font-family:'Liberation Serif', serif;transform:scaleX(0.85);transform-origin:50% 50%">7</div>
<div class="b" style="left:30px;top:315.9px;width:22.5px;height:1px;background:#cdcdcd"></div>
<div class="t" style="left:-159px;width:400px;text-align:center;top:299.59999999999997px;font-size:14.5px;color:#404040;font-weight:normal;font-family:'Liberation Serif', serif;transform:scaleX(0.85);transform-origin:50% 50%">8</div>
<div class="b" style="left:30px;top:330.09999999999997px;width:22.5px;height:1px;background:#cdcdcd"></div>
<div class="t" style="left:-159px;width:400px;text-align:center;top:313.8px;font-size:14.5px;color:#404040;font-weight:normal;font-family:'Liberation Serif', serif;transform:scaleX(0.85);transform-origin:50% 50%">9</div>
<div class="b" style="left:30px;top:344.3px;width:22.5px;height:1px;background:#cdcdcd"></div>
<div class="t" style="left:-159px;width:400px;text-align:center;top:328.00000000000006px;font-size:14.5px;color:#404040;font-weight:normal;font-family:'Liberation Serif', serif;transform:scaleX(0.85);transform-origin:50% 50%">10</div>
<div class="b" style="left:30px;top:358.5px;width:22.5px;height:1px;background:#cdcdcd"></div>
<div class="t" style="left:-159px;width:400px;text-align:center;top:342.2px;font-size:14.5px;color:#404040;font-weight:normal;font-family:'Liberation Serif', serif;transform:scaleX(0.85);transform-origin:50% 50%">11</div>
<div class="b" style="left:30px;top:372.7px;width:22.5px;height:1px;background:#cdcdcd"></div>
<div class="t" style="left:-159px;width:400px;text-align:center;top:356.40000000000003px;font-size:14.5px;color:#404040;font-weight:normal;font-family:'Liberation Serif', serif;transform:scaleX(0.85);transform-origin:50% 50%">12</div>
<div class="b" style="left:30px;top:386.9px;width:22.5px;height:1px;background:#cdcdcd"></div>
<div class="t" style="left:-159px;width:400px;text-align:center;top:370.59999999999997px;font-size:14.5px;color:#404040;font-weight:normal;font-family:'Liberation Serif', serif;transform:scaleX(0.85);transform-origin:50% 50%">13</div>
<div class="b" style="left:30px;top:401.09999999999997px;width:22.5px;height:1px;background:#cdcdcd"></div>
<div class="t" style="left:-159px;width:400px;text-align:center;top:384.8px;font-size:14.5px;color:#404040;font-weight:normal;font-family:'Liberation Serif', serif;transform:scaleX(0.85);transform-origin:50% 50%">14</div>
<div class="b" style="left:30px;top:415.3px;width:22.5px;height:1px;background:#cdcdcd"></div>
<div class="t" style="left:-159px;width:400px;text-align:center;top:399.00000000000006px;font-size:14.5px;color:#404040;font-weight:normal;font-family:'Liberation Serif', serif;transform:scaleX(0.85);transform-origin:50% 50%">15</div>
<div class="b" style="left:30px;top:429.49999999999994px;width:22.5px;height:1px;background:#cdcdcd"></div>
<div class="t" style="left:-159px;width:400px;text-align:center;top:413.2px;font-size:14.5px;color:#404040;font-weight:normal;font-family:'Liberation Serif', serif;transform:scaleX(0.85);transform-origin:50% 50%">16</div>
<div class="b" style="left:30px;top:443.7px;width:22.5px;height:1px;background:#cdcdcd"></div>
<div class="t" style="left:-159px;width:400px;text-align:center;top:427.40000000000003px;font-size:14.5px;color:#404040;font-weight:normal;font-family:'Liberation Serif', serif;transform:scaleX(0.85);transform-origin:50% 50%">17</div>
<div class="b" style="left:30px;top:457.9px;width:22.5px;height:1px;background:#cdcdcd"></div>
<div class="t" style="left:-159px;width:400px;text-align:center;top:441.59999999999997px;font-size:14.5px;color:#404040;font-weight:normal;font-family:'Liberation Serif', serif;transform:scaleX(0.85);transform-origin:50% 50%">18</div>
<div class="b" style="left:30px;top:472.09999999999997px;width:22.5px;height:1px;background:#cdcdcd"></div>
<div class="t" style="left:-159px;width:400px;text-align:center;top:455.8px;font-size:14.5px;color:#404040;font-weight:normal;font-family:'Liberation Serif', serif;transform:scaleX(0.85);transform-origin:50% 50%">19</div>
<div class="b" style="left:30px;top:486.3px;width:22.5px;height:1px;background:#cdcdcd"></div>
<div class="t" style="left:-159px;width:400px;text-align:center;top:470.00000000000006px;font-size:14.5px;color:#404040;font-weight:normal;font-family:'Liberation Serif', serif;transform:scaleX(0.85);transform-origin:50% 50%">20</div>
<div class="b" style="left:30px;top:500.49999999999994px;width:22.5px;height:1px;background:#cdcdcd"></div>
<div class="t" style="left:-159px;width:400px;text-align:center;top:484.2px;font-size:14.5px;color:#404040;font-weight:normal;font-family:'Liberation Serif', serif;transform:scaleX(0.85);transform-origin:50% 50%">21</div>
<div class="b" style="left:30px;top:514.7px;width:22.5px;height:1px;background:#cdcdcd"></div>
<div class="t" style="left:-159px;width:400px;text-align:center;top:498.40000000000003px;font-size:14.5px;color:#404040;font-weight:normal;font-family:'Liberation Serif', serif;transform:scaleX(0.85);transform-origin:50% 50%">22</div>
<div class="b" style="left:30px;top:528.9000000000001px;width:22.5px;height:1px;background:#cdcdcd"></div>
<div class="t" style="left:-159px;width:400px;text-align:center;top:512.6px;font-size:14.5px;color:#404040;font-weight:normal;font-family:'Liberation Serif', serif;transform:scaleX(0.85);transform-origin:50% 50%">23</div>
<div class="b" style="left:30px;top:543.1px;width:22.5px;height:1px;background:#cdcdcd"></div>
<div class="t" style="left:-159px;width:400px;text-align:center;top:526.8px;font-size:14.5px;color:#404040;font-weight:normal;font-family:'Liberation Serif', serif;transform:scaleX(0.85);transform-origin:50% 50%">24</div>
<div class="b" style="left:30px;top:557.3000000000001px;width:22.5px;height:1px;background:#cdcdcd"></div>
<div class="t" style="left:-159px;width:400px;text-align:center;top:541.0px;font-size:14.5px;color:#404040;font-weight:normal;font-family:'Liberation Serif', serif;transform:scaleX(0.85);transform-origin:50% 50%">25</div>
<div class="b" style="left:30px;top:571.5px;width:22.5px;height:1px;background:#cdcdcd"></div>
<div class="t" style="left:-159px;width:400px;text-align:center;top:555.1999999999999px;font-size:14.5px;color:#404040;font-weight:normal;font-family:'Liberation Serif', serif;transform:scaleX(0.85);transform-origin:50% 50%">26</div>
<div class="b" style="left:30px;top:585.7px;width:22.5px;height:1px;background:#cdcdcd"></div>
<div class="t" style="left:-159px;width:400px;text-align:center;top:569.4px;font-size:14.5px;color:#404040;font-weight:normal;font-family:'Liberation Serif', serif;transform:scaleX(0.85);transform-origin:50% 50%">27</div>
<div class="b" style="left:30px;top:599.9px;width:22.5px;height:1px;background:#cdcdcd"></div>
<div class="t" style="left:-159px;width:400px;text-align:center;top:583.5999999999999px;font-size:14.5px;color:#404040;font-weight:normal;font-family:'Liberation Serif', serif;transform:scaleX(0.85);transform-origin:50% 50%">28</div>
<div class="b" style="left:30px;top:614.1px;width:22.5px;height:1px;background:#cdcdcd"></div>
<div class="t" style="left:-159px;width:400px;text-align:center;top:597.8px;font-size:14.5px;color:#404040;font-weight:normal;font-family:'Liberation Serif', serif;transform:scaleX(0.85);transform-origin:50% 50%">29</div>
<div class="t" style="left:-159px;width:400px;text-align:center;top:612.4px;font-size:14.5px;color:#404040;font-weight:normal;font-family:'Liberation Serif', serif;transform:scaleX(0.85);transform-origin:50% 50%">32</div>
<div class="b" style="left:1.3px;top:615px;width:13.2px;height:10px;background:#f2f2f2;border:1px solid #a6a6a6;border-top:1.5px solid #a0a0a0"></div>
<div class="b" style="left:5.5px;top:620.8px;width:5px;height:1.3px;background:#555"></div>
<div class="b" style="left:7.35px;top:619px;width:1.3px;height:4px;background:#555"></div>
<div class="b" style="left:30px;top:615.4px;width:22.5px;height:0.9px;background:#cdcdcd"></div>
<div class="t" style="left:66.2px;top:227.7px;font-size:11px;color:#002064;font-weight:bold;font-family:'Liberation Sans', sans-serif;">EUR in millions</div>
<div class="t" style="left:-170.2px;width:400px;text-align:right;top:227.7px;font-size:11px;color:#002064;font-weight:bold;font-family:'Liberation Sans', sans-serif;">FY16</div>
<div class="t" style="left:-117.19999999999999px;width:400px;text-align:right;top:227.7px;font-size:11px;color:#002064;font-weight:bold;font-family:'Liberation Sans', sans-serif;">FY17</div>
<div class="t" style="left:-65.5px;width:400px;text-align:right;top:227.7px;font-size:11px;color:#002064;font-weight:bold;font-family:'Liberation Sans', sans-serif;">FY18</div>
<div class="t" style="left:-3px;width:400px;text-align:right;top:198.89px;font-size:11px;color:#002064;font-weight:bold;font-family:'Liberation Sans', sans-serif;">Var%</div>
<div class="t" style="left:-3px;width:400px;text-align:right;top:213.23999999999998px;font-size:11px;color:#002064;font-weight:bold;font-family:'Liberation Sans', sans-serif;">FY16-</div>
<div class="t" style="left:-3px;width:400px;text-align:right;top:227.58999999999997px;font-size:11px;color:#002064;font-weight:bold;font-family:'Liberation Sans', sans-serif;">FY17</div>
<div class="t" style="left:49.5px;width:400px;text-align:right;top:198.89px;font-size:11px;color:#002064;font-weight:bold;font-family:'Liberation Sans', sans-serif;">Var%</div>
<div class="t" style="left:49.5px;width:400px;text-align:right;top:213.23999999999998px;font-size:11px;color:#002064;font-weight:bold;font-family:'Liberation Sans', sans-serif;">FY17-</div>
<div class="t" style="left:49.5px;width:400px;text-align:right;top:227.58999999999997px;font-size:11px;color:#002064;font-weight:bold;font-family:'Liberation Sans', sans-serif;">FY18</div>
<div class="b" style="left:63.3px;top:244.6px;width:273.4px;height:1.6px;background:#002064"></div>
<div class="b" style="left:347.3px;top:244.6px;width:104.2px;height:1.6px;background:#002064"></div>
<div class="b" style="left:232px;top:245.3px;width:53px;height:14.7px;background:#eabdc1;border:1px solid #c0504d"></div>
<div class="b" style="left:285px;top:245.3px;width:51.7px;height:14.7px;background:#bccbe9;border:1px solid #4472c4"></div>
<div class="b" style="left:230.5px;top:243.8px;width:3px;height:3px;background:#b33c47"></div>
<div class="b" style="left:283.5px;top:243.8px;width:3px;height:3px;background:#b33c47"></div>
<div class="b" style="left:230.5px;top:258.5px;width:3px;height:3px;background:#b33c47"></div>
<div class="b" style="left:283.5px;top:258.5px;width:3px;height:3px;background:#b33c47"></div>
<div class="b" style="left:335.2px;top:243.8px;width:3px;height:3px;background:#3a6fc7"></div>
<div class="b" style="left:335.2px;top:258.5px;width:3px;height:3px;background:#3a6fc7"></div>
<div class="t" style="left:66.2px;top:242.70000000000002px;font-size:11px;color:#000;font-weight:normal;font-family:'Liberation Sans', sans-serif;">Net Sales</div>
<div class="t" style="left:-169.8px;width:400px;text-align:right;top:242.70000000000002px;font-size:11px;color:#000;font-weight:normal;font-family:'Liberation Sans', sans-serif;">14.5<span style="visibility:hidden">)</span></div>
<div class="t" style="left:-116.80000000000001px;width:400px;text-align:right;top:242.70000000000002px;font-size:11px;color:#2b1214;font-weight:normal;font-family:'Liberation Sans', sans-serif;">16.1<span style="visibility:hidden">)</span></div>
<div class="t" style="left:-65.10000000000002px;width:400px;text-align:right;top:242.70000000000002px;font-size:11px;color:#0f1d3a;font-weight:normal;font-family:'Liberation Sans', sans-serif;">15.0<span style="visibility:hidden">)</span></div>
<div class="t" style="left:-3.1999999999999886px;width:400px;text-align:right;top:242.70000000000002px;font-size:11px;color:#2e2e2e;font-weight:normal;font-family:'Liberation Sans', sans-serif;transform:scaleX(0.88);transform-origin:100% 50%">11%</div>
<div class="t" style="left:66.2px;top:256.90000000000003px;font-size:11px;color:#000;font-weight:normal;font-family:'Liberation Sans', sans-serif;">Other revenues</div>
<div class="t" style="left:-169.8px;width:400px;text-align:right;top:256.90000000000003px;font-size:11px;color:#000;font-weight:normal;font-family:'Liberation Sans', sans-serif;">4.8<span style="visibility:hidden">)</span></div>
<div class="t" style="left:-116.80000000000001px;width:400px;text-align:right;top:256.90000000000003px;font-size:11px;color:#000;font-weight:normal;font-family:'Liberation Sans', sans-serif;">7.0<span style="visibility:hidden">)</span></div>
<div class="t" style="left:-65.10000000000002px;width:400px;text-align:right;top:256.90000000000003px;font-size:11px;color:#000;font-weight:normal;font-family:'Liberation Sans', sans-serif;">6.4<span style="visibility:hidden">)</span></div>
<div class="t" style="left:-3.1999999999999886px;width:400px;text-align:right;top:256.90000000000003px;font-size:11px;color:#2e2e2e;font-weight:normal;font-family:'Liberation Sans', sans-serif;transform:scaleX(0.88);transform-origin:100% 50%">45%</div>
<div class="t" style="left:49.30000000000001px;width:400px;text-align:right;top:256.90000000000003px;font-size:11px;color:#2e2e2e;font-weight:normal;font-family:'Liberation Sans', sans-serif;transform:scaleX(0.88);transform-origin:100% 50%">-8%</div>
<div class="t" style="left:66.2px;top:271.1px;font-size:11px;color:#000;font-weight:normal;font-family:'Liberation Sans', sans-serif;">Recharges</div>
<div class="t" style="left:-169.8px;width:400px;text-align:right;top:271.1px;font-size:11px;color:#000;font-weight:normal;font-family:'Liberation Sans', sans-serif;">3.2<span style="visibility:hidden">)</span></div>
<div class="t" style="left:-116.80000000000001px;width:400px;text-align:right;top:271.1px;font-size:11px;color:#000;font-weight:normal;font-family:'Liberation Sans', sans-serif;">2.9<span style="visibility:hidden">)</span></div>
<div class="t" style="left:-65.10000000000002px;width:400px;text-align:right;top:271.1px;font-size:11px;color:#000;font-weight:normal;font-family:'Liberation Sans', sans-serif;">4.9<span style="visibility:hidden">)</span></div>
<div class="t" style="left:-3.1999999999999886px;width:400px;text-align:right;top:271.1px;font-size:11px;color:#2e2e2e;font-weight:normal;font-family:'Liberation Sans', sans-serif;transform:scaleX(0.88);transform-origin:100% 50%">-9%</div>
<div class="t" style="left:49.30000000000001px;width:400px;text-align:right;top:271.1px;font-size:11px;color:#2e2e2e;font-weight:normal;font-family:'Liberation Sans', sans-serif;transform:scaleX(0.88);transform-origin:100% 50%">67%</div>
<div class="b" style="left:63.3px;top:287.3px;width:273.4px;height:1.2px;background:#3a3a3a"></div>
<div class="b" style="left:347.3px;top:287.3px;width:104.2px;height:1.2px;background:#3a3a3a"></div>
<div class="t" style="left:66.2px;top:285.3px;font-size:11px;color:#000;font-weight:normal;font-family:'Liberation Sans', sans-serif;">Total revenues</div>
<div class="t" style="left:-169.8px;width:400px;text-align:right;top:285.3px;font-size:11px;color:#000;font-weight:bold;font-family:'Liberation Sans', sans-serif;">22.5<span style="visibility:hidden">)</span></div>
<div class="t" style="left:-116.80000000000001px;width:400px;text-align:right;top:285.3px;font-size:11px;color:#000;font-weight:bold;font-family:'Liberation Sans', sans-serif;">26.0<span style="visibility:hidden">)</span></div>
<div class="t" style="left:-65.10000000000002px;width:400px;text-align:right;top:285.3px;font-size:11px;color:#000;font-weight:bold;font-family:'Liberation Sans', sans-serif;">26.3<span style="visibility:hidden">)</span></div>
<div class="t" style="left:-3.1999999999999886px;width:400px;text-align:right;top:285.3px;font-size:11px;color:#111;font-weight:bold;font-family:'Liberation Sans', sans-serif;transform:scaleX(0.88);transform-origin:100% 50%">16%</div>
<div class="t" style="left:49.30000000000001px;width:400px;text-align:right;top:285.3px;font-size:11px;color:#111;font-weight:bold;font-family:'Liberation Sans', sans-serif;transform:scaleX(0.88);transform-origin:100% 50%">1%</div>
<div class="t" style="left:66.2px;top:299.5px;font-size:11px;color:#000;font-weight:normal;font-family:'Liberation Sans', sans-serif;">Direct costs</div>
<div class="t" style="left:-169.8px;width:400px;text-align:right;top:299.5px;font-size:11px;color:#000;font-weight:normal;font-family:'Liberation Sans', sans-serif;">(4.4)</div>
<div class="t" style="left:-116.80000000000001px;width:400px;text-align:right;top:299.5px;font-size:11px;color:#000;font-weight:normal;font-family:'Liberation Sans', sans-serif;">(5.5)</div>
<div class="t" style="left:-65.10000000000002px;width:400px;text-align:right;top:299.5px;font-size:11px;color:#000;font-weight:normal;font-family:'Liberation Sans', sans-serif;">(5.7)</div>
<div class="t" style="left:-3.1999999999999886px;width:400px;text-align:right;top:299.5px;font-size:11px;color:#2e2e2e;font-weight:normal;font-family:'Liberation Sans', sans-serif;transform:scaleX(0.88);transform-origin:100% 50%">23%</div>
<div class="t" style="left:49.30000000000001px;width:400px;text-align:right;top:299.5px;font-size:11px;color:#2e2e2e;font-weight:normal;font-family:'Liberation Sans', sans-serif;transform:scaleX(0.88);transform-origin:100% 50%">4%</div>
<div class="b" style="left:63.3px;top:315.7px;width:273.4px;height:1.2px;background:#3a3a3a"></div>
<div class="b" style="left:347.3px;top:315.7px;width:104.2px;height:1.2px;background:#3a3a3a"></div>
<div class="t" style="left:66.2px;top:313.7px;font-size:11px;color:#000;font-weight:normal;font-family:'Liberation Sans', sans-serif;">Gross margin</div>
<div class="t" style="left:-169.8px;width:400px;text-align:right;top:313.7px;font-size:11px;color:#000;font-weight:bold;font-family:'Liberation Sans', sans-serif;">18.1<span style="visibility:hidden">)</span></div>
<div class="t" style="left:-116.80000000000001px;width:400px;text-align:right;top:313.7px;font-size:11px;color:#000;font-weight:bold;font-family:'Liberation Sans', sans-serif;">20.6<span style="visibility:hidden">)</span></div>
<div class="t" style="left:-65.10000000000002px;width:400px;text-align:right;top:313.7px;font-size:11px;color:#000;font-weight:bold;font-family:'Liberation Sans', sans-serif;">20.6<span style="visibility:hidden">)</span></div>
<div class="t" style="left:-3.1999999999999886px;width:400px;text-align:right;top:313.7px;font-size:11px;color:#111;font-weight:bold;font-family:'Liberation Sans', sans-serif;transform:scaleX(0.88);transform-origin:100% 50%">14%</div>
<div class="t" style="left:49.30000000000001px;width:400px;text-align:right;top:313.7px;font-size:11px;color:#111;font-weight:bold;font-family:'Liberation Sans', sans-serif;transform:scaleX(0.88);transform-origin:100% 50%">0%</div>
<div class="t" style="left:66.2px;top:327.90000000000003px;font-size:11px;color:#000;font-weight:normal;font-family:'Liberation Sans', sans-serif;">Other operating expens</div>
<div class="t" style="left:-169.8px;width:400px;text-align:right;top:327.90000000000003px;font-size:11px;color:#000;font-weight:normal;font-family:'Liberation Sans', sans-serif;">(3.4)</div>
<div class="t" style="left:-116.80000000000001px;width:400px;text-align:right;top:327.90000000000003px;font-size:11px;color:#000;font-weight:normal;font-family:'Liberation Sans', sans-serif;">(3.7)</div>
<div class="t" style="left:-65.10000000000002px;width:400px;text-align:right;top:327.90000000000003px;font-size:11px;color:#000;font-weight:normal;font-family:'Liberation Sans', sans-serif;">(6.7)</div>
<div class="t" style="left:-3.1999999999999886px;width:400px;text-align:right;top:327.90000000000003px;font-size:11px;color:#2e2e2e;font-weight:normal;font-family:'Liberation Sans', sans-serif;transform:scaleX(0.88);transform-origin:100% 50%">9%</div>
<div class="t" style="left:49.30000000000001px;width:400px;text-align:right;top:327.90000000000003px;font-size:11px;color:#2e2e2e;font-weight:normal;font-family:'Liberation Sans', sans-serif;transform:scaleX(0.88);transform-origin:100% 50%">81%</div>
<div class="t" style="left:66.2px;top:342.1px;font-size:11px;color:#000;font-weight:normal;font-family:'Liberation Sans', sans-serif;">Personnel expenses</div>
<div class="t" style="left:-169.8px;width:400px;text-align:right;top:342.1px;font-size:11px;color:#000;font-weight:normal;font-family:'Liberation Sans', sans-serif;">(6.2)</div>
<div class="t" style="left:-116.80000000000001px;width:400px;text-align:right;top:342.1px;font-size:11px;color:#000;font-weight:normal;font-family:'Liberation Sans', sans-serif;">(8.1)</div>
<div class="t" style="left:-65.10000000000002px;width:400px;text-align:right;top:342.1px;font-size:11px;color:#000;font-weight:normal;font-family:'Liberation Sans', sans-serif;">(5.8)</div>
<div class="t" style="left:-3.1999999999999886px;width:400px;text-align:right;top:342.1px;font-size:11px;color:#2e2e2e;font-weight:normal;font-family:'Liberation Sans', sans-serif;transform:scaleX(0.88);transform-origin:100% 50%">31%</div>
<div class="t" style="left:49.30000000000001px;width:400px;text-align:right;top:342.1px;font-size:11px;color:#2e2e2e;font-weight:normal;font-family:'Liberation Sans', sans-serif;transform:scaleX(0.88);transform-origin:100% 50%">-28%</div>
<div class="t" style="left:66.2px;top:356.3px;font-size:11px;color:#000;font-weight:normal;font-family:'Liberation Sans', sans-serif;">Leasing</div>
<div class="t" style="left:-169.8px;width:400px;text-align:right;top:356.3px;font-size:11px;color:#000;font-weight:normal;font-family:'Liberation Sans', sans-serif;">(1.1)</div>
<div class="t" style="left:-116.80000000000001px;width:400px;text-align:right;top:356.3px;font-size:11px;color:#000;font-weight:normal;font-family:'Liberation Sans', sans-serif;">(1.1)</div>
<div class="t" style="left:-65.10000000000002px;width:400px;text-align:right;top:356.3px;font-size:11px;color:#000;font-weight:normal;font-family:'Liberation Sans', sans-serif;">1.6<span style="visibility:hidden">)</span></div>
<div class="t" style="left:-3.1999999999999886px;width:400px;text-align:right;top:356.3px;font-size:11px;color:#2e2e2e;font-weight:normal;font-family:'Liberation Sans', sans-serif;transform:scaleX(0.88);transform-origin:100% 50%">-6%</div>
<div class="t" style="left:49.30000000000001px;width:400px;text-align:right;top:356.3px;font-size:11px;color:#2e2e2e;font-weight:normal;font-family:'Liberation Sans', sans-serif;transform:scaleX(0.88);transform-origin:100% 50%">&lt;-100.0%</div>
<div class="t" style="left:66.2px;top:370.5px;font-size:11px;color:#000;font-weight:normal;font-family:'Liberation Sans', sans-serif;">Services</div>
<div class="t" style="left:-169.8px;width:400px;text-align:right;top:370.5px;font-size:11px;color:#000;font-weight:normal;font-family:'Liberation Sans', sans-serif;">(2.5)</div>
<div class="t" style="left:-116.80000000000001px;width:400px;text-align:right;top:370.5px;font-size:11px;color:#000;font-weight:normal;font-family:'Liberation Sans', sans-serif;">(1.8)</div>
<div class="t" style="left:-65.10000000000002px;width:400px;text-align:right;top:370.5px;font-size:11px;color:#000;font-weight:normal;font-family:'Liberation Sans', sans-serif;">(2.0)</div>
<div class="t" style="left:-3.1999999999999886px;width:400px;text-align:right;top:370.5px;font-size:11px;color:#2e2e2e;font-weight:normal;font-family:'Liberation Sans', sans-serif;transform:scaleX(0.88);transform-origin:100% 50%">-28%</div>
<div class="t" style="left:49.30000000000001px;width:400px;text-align:right;top:370.5px;font-size:11px;color:#2e2e2e;font-weight:normal;font-family:'Liberation Sans', sans-serif;transform:scaleX(0.88);transform-origin:100% 50%">6%</div>
<div class="t" style="left:66.2px;top:384.7px;font-size:11px;color:#000;font-weight:normal;font-family:'Liberation Sans', sans-serif;">Travel costs</div>
<div class="t" style="left:-169.8px;width:400px;text-align:right;top:384.7px;font-size:11px;color:#000;font-weight:normal;font-family:'Liberation Sans', sans-serif;">(1.8)</div>
<div class="t" style="left:-116.80000000000001px;width:400px;text-align:right;top:384.7px;font-size:11px;color:#000;font-weight:normal;font-family:'Liberation Sans', sans-serif;">(2.4)</div>
<div class="t" style="left:-65.10000000000002px;width:400px;text-align:right;top:384.7px;font-size:11px;color:#000;font-weight:normal;font-family:'Liberation Sans', sans-serif;">(2.5)</div>
<div class="t" style="left:-3.1999999999999886px;width:400px;text-align:right;top:384.7px;font-size:11px;color:#2e2e2e;font-weight:normal;font-family:'Liberation Sans', sans-serif;transform:scaleX(0.88);transform-origin:100% 50%">32%</div>
<div class="t" style="left:49.30000000000001px;width:400px;text-align:right;top:384.7px;font-size:11px;color:#2e2e2e;font-weight:normal;font-family:'Liberation Sans', sans-serif;transform:scaleX(0.88);transform-origin:100% 50%">5%</div>
<div class="t" style="left:66.2px;top:398.90000000000003px;font-size:11px;color:#000;font-weight:normal;font-family:'Liberation Sans', sans-serif;">Other income</div>
<div class="t" style="left:-169.8px;width:400px;text-align:right;top:398.90000000000003px;font-size:11px;color:#000;font-weight:normal;font-family:'Liberation Sans', sans-serif;">0.0<span style="visibility:hidden">)</span></div>
<div class="t" style="left:-116.80000000000001px;width:400px;text-align:right;top:398.90000000000003px;font-size:11px;color:#000;font-weight:normal;font-family:'Liberation Sans', sans-serif;">(0.0)</div>
<div class="t" style="left:-65.10000000000002px;width:400px;text-align:right;top:398.90000000000003px;font-size:11px;color:#000;font-weight:normal;font-family:'Liberation Sans', sans-serif;">0.0<span style="visibility:hidden">)</span></div>
<div class="t" style="left:-3.1999999999999886px;width:400px;text-align:right;top:398.90000000000003px;font-size:11px;color:#2e2e2e;font-weight:normal;font-family:'Liberation Sans', sans-serif;transform:scaleX(0.88);transform-origin:100% 50%">&lt;-100.0%</div>
<div class="t" style="left:49.30000000000001px;width:400px;text-align:right;top:398.90000000000003px;font-size:11px;color:#2e2e2e;font-weight:normal;font-family:'Liberation Sans', sans-serif;transform:scaleX(0.88);transform-origin:100% 50%">&lt;-100.0%</div>
<div class="t" style="left:66.2px;top:413.09999999999997px;font-size:11px;color:#000;font-weight:normal;font-family:'Liberation Sans', sans-serif;">Capitalized costs</div>
<div class="t" style="left:-169.8px;width:400px;text-align:right;top:413.09999999999997px;font-size:11px;color:#000;font-weight:normal;font-family:'Liberation Sans', sans-serif;">5.3<span style="visibility:hidden">)</span></div>
<div class="t" style="left:-116.80000000000001px;width:400px;text-align:right;top:413.09999999999997px;font-size:11px;color:#000;font-weight:normal;font-family:'Liberation Sans', sans-serif;">0.7<span style="visibility:hidden">)</span></div>
<div class="t" style="left:-65.10000000000002px;width:400px;text-align:right;top:413.09999999999997px;font-size:11px;color:#000;font-weight:normal;font-family:'Liberation Sans', sans-serif;">-<span style="visibility:hidden">00)</span></div>
<div class="t" style="left:-3.1999999999999886px;width:400px;text-align:right;top:413.09999999999997px;font-size:11px;color:#2e2e2e;font-weight:normal;font-family:'Liberation Sans', sans-serif;transform:scaleX(0.88);transform-origin:100% 50%">-86%</div>
<div class="t" style="left:49.30000000000001px;width:400px;text-align:right;top:413.09999999999997px;font-size:11px;color:#2e2e2e;font-weight:normal;font-family:'Liberation Sans', sans-serif;transform:scaleX(0.88);transform-origin:100% 50%">-100%</div>
<div class="b" style="left:63.3px;top:430.0px;width:273.4px;height:14.2px;background:#002064"></div>
<div class="b" style="left:347.3px;top:430.0px;width:104.2px;height:14.2px;background:#002064"></div>
<div class="t" style="left:66.2px;top:427.3px;font-size:11px;color:#fff;font-weight:bold;font-family:'Liberation Sans', sans-serif;">EBITDA</div>
<div class="t" style="left:-169.8px;width:400px;text-align:right;top:427.3px;font-size:11px;color:#fff;font-weight:bold;font-family:'Liberation Sans', sans-serif;">8.3<span style="visibility:hidden">)</span></div>
<div class="t" style="left:-116.80000000000001px;width:400px;text-align:right;top:427.3px;font-size:11px;color:#fff;font-weight:bold;font-family:'Liberation Sans', sans-serif;">4.2<span style="visibility:hidden">)</span></div>
<div class="t" style="left:-65.10000000000002px;width:400px;text-align:right;top:427.3px;font-size:11px;color:#fff;font-weight:bold;font-family:'Liberation Sans', sans-serif;">5.3<span style="visibility:hidden">)</span></div>
<div class="t" style="left:-3.1999999999999886px;width:400px;text-align:right;top:427.3px;font-size:11px;color:#fff;font-weight:bold;font-family:'Liberation Sans', sans-serif;transform:scaleX(0.88);transform-origin:100% 50%">-49%</div>
<div class="t" style="left:49.30000000000001px;width:400px;text-align:right;top:427.3px;font-size:11px;color:#fff;font-weight:bold;font-family:'Liberation Sans', sans-serif;transform:scaleX(0.88);transform-origin:100% 50%">25%</div>
<div class="t" style="left:66.2px;top:441.5px;font-size:11px;color:#000;font-weight:normal;font-family:'Liberation Sans', sans-serif;">D&amp;A</div>
<div class="t" style="left:-169.8px;width:400px;text-align:right;top:441.5px;font-size:11px;color:#000;font-weight:normal;font-family:'Liberation Sans', sans-serif;">(2.0)</div>
<div class="t" style="left:-116.80000000000001px;width:400px;text-align:right;top:441.5px;font-size:11px;color:#000;font-weight:normal;font-family:'Liberation Sans', sans-serif;">(2.0)</div>
<div class="t" style="left:-65.10000000000002px;width:400px;text-align:right;top:441.5px;font-size:11px;color:#000;font-weight:normal;font-family:'Liberation Sans', sans-serif;">(1.9)</div>
<div class="t" style="left:-3.1999999999999886px;width:400px;text-align:right;top:441.5px;font-size:11px;color:#2e2e2e;font-weight:normal;font-family:'Liberation Sans', sans-serif;transform:scaleX(0.88);transform-origin:100% 50%">0%</div>
<div class="t" style="left:49.30000000000001px;width:400px;text-align:right;top:441.5px;font-size:11px;color:#2e2e2e;font-weight:normal;font-family:'Liberation Sans', sans-serif;transform:scaleX(0.88);transform-origin:100% 50%">-8%</div>
<div class="b" style="left:63.3px;top:457.7px;width:273.4px;height:1.2px;background:#3a3a3a"></div>
<div class="b" style="left:347.3px;top:457.7px;width:104.2px;height:1.2px;background:#3a3a3a"></div>
<div class="t" style="left:66.2px;top:455.7px;font-size:11px;color:#000;font-weight:normal;font-family:'Liberation Sans', sans-serif;">EBIT</div>
<div class="t" style="left:-169.8px;width:400px;text-align:right;top:455.7px;font-size:11px;color:#000;font-weight:bold;font-family:'Liberation Sans', sans-serif;">6.3<span style="visibility:hidden">)</span></div>
<div class="t" style="left:-116.80000000000001px;width:400px;text-align:right;top:455.7px;font-size:11px;color:#000;font-weight:bold;font-family:'Liberation Sans', sans-serif;">2.2<span style="visibility:hidden">)</span></div>
<div class="t" style="left:-65.10000000000002px;width:400px;text-align:right;top:455.7px;font-size:11px;color:#000;font-weight:bold;font-family:'Liberation Sans', sans-serif;">3.4<span style="visibility:hidden">)</span></div>
<div class="t" style="left:-3.1999999999999886px;width:400px;text-align:right;top:455.7px;font-size:11px;color:#111;font-weight:bold;font-family:'Liberation Sans', sans-serif;transform:scaleX(0.88);transform-origin:100% 50%">-65%</div>
<div class="t" style="left:49.30000000000001px;width:400px;text-align:right;top:455.7px;font-size:11px;color:#111;font-weight:bold;font-family:'Liberation Sans', sans-serif;transform:scaleX(0.88);transform-origin:100% 50%">55%</div>
<div class="t" style="left:66.2px;top:469.90000000000003px;font-size:11px;color:#000;font-weight:normal;font-family:'Liberation Sans', sans-serif;">Financial items</div>
<div class="t" style="left:-169.8px;width:400px;text-align:right;top:469.90000000000003px;font-size:11px;color:#000;font-weight:normal;font-family:'Liberation Sans', sans-serif;">(2.8)</div>
<div class="t" style="left:-116.80000000000001px;width:400px;text-align:right;top:469.90000000000003px;font-size:11px;color:#000;font-weight:normal;font-family:'Liberation Sans', sans-serif;">(2.7)</div>
<div class="t" style="left:-65.10000000000002px;width:400px;text-align:right;top:469.90000000000003px;font-size:11px;color:#000;font-weight:normal;font-family:'Liberation Sans', sans-serif;">(2.3)</div>
<div class="t" style="left:-3.1999999999999886px;width:400px;text-align:right;top:469.90000000000003px;font-size:11px;color:#2e2e2e;font-weight:normal;font-family:'Liberation Sans', sans-serif;transform:scaleX(0.88);transform-origin:100% 50%">-5%</div>
<div class="t" style="left:49.30000000000001px;width:400px;text-align:right;top:469.90000000000003px;font-size:11px;color:#2e2e2e;font-weight:normal;font-family:'Liberation Sans', sans-serif;transform:scaleX(0.88);transform-origin:100% 50%">-17%</div>
<div class="t" style="left:66.2px;top:484.09999999999997px;font-size:11px;color:#000;font-weight:normal;font-family:'Liberation Sans', sans-serif;">Extraordinary items</div>
<div class="t" style="left:-169.8px;width:400px;text-align:right;top:484.09999999999997px;font-size:11px;color:#000;font-weight:normal;font-family:'Liberation Sans', sans-serif;">(0.0)</div>
<div class="t" style="left:-116.80000000000001px;width:400px;text-align:right;top:484.09999999999997px;font-size:11px;color:#000;font-weight:normal;font-family:'Liberation Sans', sans-serif;">(4.6)</div>
<div class="t" style="left:-65.10000000000002px;width:400px;text-align:right;top:484.09999999999997px;font-size:11px;color:#000;font-weight:normal;font-family:'Liberation Sans', sans-serif;">(0.0)</div>
<div class="t" style="left:-3.1999999999999886px;width:400px;text-align:right;top:484.09999999999997px;font-size:11px;color:#2e2e2e;font-weight:normal;font-family:'Liberation Sans', sans-serif;transform:scaleX(0.88);transform-origin:100% 50%">&gt;100.0%</div>
<div class="t" style="left:49.30000000000001px;width:400px;text-align:right;top:484.09999999999997px;font-size:11px;color:#2e2e2e;font-weight:normal;font-family:'Liberation Sans', sans-serif;transform:scaleX(0.88);transform-origin:100% 50%">-100%</div>
<div class="b" style="left:63.3px;top:500.29999999999995px;width:273.4px;height:1.2px;background:#3a3a3a"></div>
<div class="b" style="left:347.3px;top:500.29999999999995px;width:104.2px;height:1.2px;background:#3a3a3a"></div>
<div class="t" style="left:66.2px;top:498.3px;font-size:11px;color:#000;font-weight:normal;font-family:'Liberation Sans', sans-serif;">EBT</div>
<div class="t" style="left:-169.8px;width:400px;text-align:right;top:498.3px;font-size:11px;color:#000;font-weight:bold;font-family:'Liberation Sans', sans-serif;">3.4<span style="visibility:hidden">)</span></div>
<div class="t" style="left:-116.80000000000001px;width:400px;text-align:right;top:498.3px;font-size:11px;color:#000;font-weight:bold;font-family:'Liberation Sans', sans-serif;">(5.1)</div>
<div class="t" style="left:-65.10000000000002px;width:400px;text-align:right;top:498.3px;font-size:11px;color:#000;font-weight:bold;font-family:'Liberation Sans', sans-serif;">1.1<span style="visibility:hidden">)</span></div>
<div class="t" style="left:-3.1999999999999886px;width:400px;text-align:right;top:498.3px;font-size:11px;color:#111;font-weight:bold;font-family:'Liberation Sans', sans-serif;transform:scaleX(0.88);transform-origin:100% 50%">&lt;-100.0%</div>
<div class="t" style="left:49.30000000000001px;width:400px;text-align:right;top:498.3px;font-size:11px;color:#111;font-weight:bold;font-family:'Liberation Sans', sans-serif;transform:scaleX(0.88);transform-origin:100% 50%">&lt;-100.0%</div>
<div class="t" style="left:66.2px;top:512.5px;font-size:11px;color:#000;font-weight:normal;font-family:'Liberation Sans', sans-serif;">Taxes</div>
<div class="t" style="left:-169.8px;width:400px;text-align:right;top:512.5px;font-size:11px;color:#000;font-weight:normal;font-family:'Liberation Sans', sans-serif;">(0.5)</div>
<div class="t" style="left:-116.80000000000001px;width:400px;text-align:right;top:512.5px;font-size:11px;color:#000;font-weight:normal;font-family:'Liberation Sans', sans-serif;">(1.0)</div>
<div class="t" style="left:-65.10000000000002px;width:400px;text-align:right;top:512.5px;font-size:11px;color:#000;font-weight:normal;font-family:'Liberation Sans', sans-serif;">(0.4)</div>
<div class="t" style="left:-3.1999999999999886px;width:400px;text-align:right;top:512.5px;font-size:11px;color:#2e2e2e;font-weight:normal;font-family:'Liberation Sans', sans-serif;transform:scaleX(0.88);transform-origin:100% 50%">&gt;100.0%</div>
<div class="t" style="left:49.30000000000001px;width:400px;text-align:right;top:512.5px;font-size:11px;color:#2e2e2e;font-weight:normal;font-family:'Liberation Sans', sans-serif;transform:scaleX(0.88);transform-origin:100% 50%">-63%</div>
<div class="b" style="left:63.3px;top:528.7px;width:273.4px;height:1.2px;background:#3a3a3a"></div>
<div class="b" style="left:347.3px;top:528.7px;width:104.2px;height:1.2px;background:#3a3a3a"></div>
<div class="t" style="left:66.2px;top:526.6999999999999px;font-size:11px;color:#000;font-weight:bold;font-family:'Liberation Sans', sans-serif;">Net Income</div>
<div class="t" style="left:-169.8px;width:400px;text-align:right;top:526.6999999999999px;font-size:11px;color:#000;font-weight:bold;font-family:'Liberation Sans', sans-serif;">2.9<span style="visibility:hidden">)</span></div>
<div class="t" style="left:-116.80000000000001px;width:400px;text-align:right;top:526.6999999999999px;font-size:11px;color:#000;font-weight:bold;font-family:'Liberation Sans', sans-serif;">(6.1)</div>
<div class="t" style="left:-65.10000000000002px;width:400px;text-align:right;top:526.6999999999999px;font-size:11px;color:#000;font-weight:bold;font-family:'Liberation Sans', sans-serif;">0.8<span style="visibility:hidden">)</span></div>
<div class="t" style="left:-3.1999999999999886px;width:400px;text-align:right;top:526.6999999999999px;font-size:11px;color:#111;font-weight:bold;font-family:'Liberation Sans', sans-serif;transform:scaleX(0.88);transform-origin:100% 50%">&lt;-100.0%</div>
<div class="t" style="left:49.30000000000001px;width:400px;text-align:right;top:526.6999999999999px;font-size:11px;color:#111;font-weight:bold;font-family:'Liberation Sans', sans-serif;transform:scaleX(0.88);transform-origin:100% 50%">&lt;-100.0%</div>
<div class="b" style="left:63.3px;top:543.0px;width:273.4px;height:1.9px;background:#1a1a1a"></div>
<div class="b" style="left:347.3px;top:543.0px;width:104.2px;height:1.9px;background:#1a1a1a"></div>
<div class="b" style="left:399px;top:245.4px;width:52.5px;height:14.9px;border:1.5px solid #1e7145;overflow:hidden;background:#fff"><div style="position:absolute;right:1px;top:-3.2px;font-size:11px;line-height:20px;white-space:pre;color:#1a1a1a;transform:scaleX(0.9);transform-origin:100% 50%">E4/D4)-1))))</div></div>
<div class="b" style="left:449.3px;top:258px;width:4.2px;height:4.2px;background:#1e7145;border:0.6px solid #fff"></div>
<div class="b" style="left:63.3px;top:558.5999999999999px;width:273.4px;height:56.00000000000007px;background:#efefef"></div>
<div class="t" style="left:66.2px;top:555.5999999999999px;font-size:11px;color:#262626;font-weight:normal;font-family:'Liberation Sans', sans-serif;transform:scaleX(0.87);transform-origin:0 50%">KPIs</div>
<div class="t" style="left:66.2px;top:569.6px;font-size:11px;color:#262626;font-weight:normal;font-family:'Liberation Sans', sans-serif;transform:scaleX(0.87);transform-origin:0 50%">GM%</div>
<div class="t" style="left:-170.2px;width:400px;text-align:right;top:569.5999999999999px;font-size:11px;color:#262626;font-weight:normal;font-family:'Liberation Sans', sans-serif;transform:scaleX(0.88);transform-origin:100% 50%">80%</div>
<div class="t" style="left:-117.19999999999999px;width:400px;text-align:right;top:569.5999999999999px;font-size:11px;color:#262626;font-weight:normal;font-family:'Liberation Sans', sans-serif;transform:scaleX(0.88);transform-origin:100% 50%">79%</div>
<div class="t" style="left:-65.5px;width:400px;text-align:right;top:569.5999999999999px;font-size:11px;color:#262626;font-weight:normal;font-family:'Liberation Sans', sans-serif;transform:scaleX(0.88);transform-origin:100% 50%">78%</div>
<div class="t" style="left:66.2px;top:583.8px;font-size:11px;color:#262626;font-weight:normal;font-family:'Liberation Sans', sans-serif;transform:scaleX(0.87);transform-origin:0 50%">EBITDA%</div>
<div class="t" style="left:-170.2px;width:400px;text-align:right;top:583.7999999999998px;font-size:11px;color:#262626;font-weight:normal;font-family:'Liberation Sans', sans-serif;transform:scaleX(0.88);transform-origin:100% 50%">37%</div>
<div class="t" style="left:-117.19999999999999px;width:400px;text-align:right;top:583.7999999999998px;font-size:11px;color:#262626;font-weight:normal;font-family:'Liberation Sans', sans-serif;transform:scaleX(0.88);transform-origin:100% 50%">16%</div>
<div class="t" style="left:-65.5px;width:400px;text-align:right;top:583.7999999999998px;font-size:11px;color:#262626;font-weight:normal;font-family:'Liberation Sans', sans-serif;transform:scaleX(0.88);transform-origin:100% 50%">20%</div>
<div class="t" style="left:66.2px;top:598.0px;font-size:11px;color:#262626;font-weight:normal;font-family:'Liberation Sans', sans-serif;transform:scaleX(0.87);transform-origin:0 50%">EBIT%</div>
<div class="t" style="left:-170.2px;width:400px;text-align:right;top:597.9999999999999px;font-size:11px;color:#262626;font-weight:normal;font-family:'Liberation Sans', sans-serif;transform:scaleX(0.88);transform-origin:100% 50%">28%</div>
<div class="t" style="left:-117.19999999999999px;width:400px;text-align:right;top:597.9999999999999px;font-size:11px;color:#262626;font-weight:normal;font-family:'Liberation Sans', sans-serif;transform:scaleX(0.88);transform-origin:100% 50%">8%</div>
<div class="t" style="left:-65.5px;width:400px;text-align:right;top:597.9999999999999px;font-size:11px;color:#262626;font-weight:normal;font-family:'Liberation Sans', sans-serif;transform:scaleX(0.88);transform-origin:100% 50%">13%</div>
<div class="b" style="left:399px;top:170px;width:52.5px;height:17px;background:#d2d2d2"></div>
<div class="b" style="left:399px;top:186.2px;width:52.5px;height:1.6px;background:#5a9a74"></div>
<div class="b" style="left:336.5px;top:171px;width:198.5px;height:15.6px;background:#fff;border:1px solid #c4c4c4"></div>
<div class="t" style="left:342.5px;top:168.6px;font-size:10px;color:#595959;font-weight:normal;font-family:'Liberation Sans', sans-serif;transform:scaleX(0.8853);transform-origin:0 50%;">IF(logical_test, <b style="color:#262626">[value_if_true]</b>, [value_if_false])</div>
<div class="b" style="left:1154.6px;top:187.5px;width:15.4px;height:436px;background:#ededed"></div>
<div class="b" style="left:1154.6px;top:187.5px;width:1px;height:436px;background:#c4c4c4"></div>
<div class="b" style="left:1155.7px;top:171px;width:12.2px;height:11.4px;background:#fff;border:1px solid #b0b0b0"></div>
<svg class="s" style="left:1158px;top:174px;" width="8" height="6" viewBox="0 0 8 6"><path d="M1 4.5 L4 1.5 L7 4.5 Z" fill="#222"/></svg>
<div class="b" style="left:1156px;top:199px;width:12px;height:372.4px;background:#fff;border:1px solid #b8b8b8"></div>
<div class="b" style="left:1156.7px;top:612.6px;width:10.8px;height:10.8px;background:#fff;border:1px solid #b0b0b0"></div>
<svg class="s" style="left:1158px;top:615px;" width="8" height="6" viewBox="0 0 8 6"><path d="M1 1.5 L4 4.5 L7 1.5 Z" fill="#222"/></svg>
<div class="b" style="left:0px;top:623.5px;width:1170px;height:18px;background:#e6e6e6"></div>
<div class="b" style="left:0px;top:623.5px;width:1170px;height:1px;background:#c6c6c6"></div>
<svg class="s" style="left:15px;top:628px;" width="8" height="9" viewBox="0 0 8 9"><path d="M6 0.5 L1.5 4.5 L6 8.5 Z" fill="#1e7145"/></svg>
<svg class="s" style="left:33px;top:628px;" width="8" height="9" viewBox="0 0 8 9"><path d="M2 0.5 L6.5 4.5 L2 8.5 Z" fill="#c8c8c8"/></svg>
<div class="b" style="left:49.3px;top:633.2px;width:1.5px;height:1.5px;background:#1e7145"></div>
<div class="b" style="left:52.699999999999996px;top:633.2px;width:1.5px;height:1.5px;background:#1e7145"></div>
<div class="b" style="left:56.099999999999994px;top:633.2px;width:1.5px;height:1.5px;background:#1e7145"></div>
<div class="b" style="left:62.5px;top:627px;width:1px;height:12px;background:#b4b4b4"></div>
<div class="t" style="left:73px;top:621.0px;font-size:10px;color:#444;font-weight:normal;font-family:'Liberation Sans', sans-serif;transform:scaleX(0.9474);transform-origin:0 50%;">1.1 FY2016</div>
<div class="b" style="left:131.7px;top:627px;width:1px;height:12px;background:#b4b4b4"></div>
<div class="t" style="left:142px;top:621.0px;font-size:10px;color:#444;font-weight:normal;font-family:'Liberation Sans', sans-serif;transform:scaleX(0.9474);transform-origin:0 50%;">1.2 FY2017</div>
<div class="b" style="left:200.5px;top:627px;width:1px;height:12px;background:#b4b4b4"></div>
<div class="t" style="left:210px;top:621.0px;font-size:10px;color:#444;font-weight:normal;font-family:'Liberation Sans', sans-serif;transform:scaleX(0.9571);transform-origin:0 50%;">1.3 FY2018</div>
<div class="b" style="left:270.8px;top:625px;width:116px;height:13.7px;background:#002064"></div>
<div class="t" style="left:279px;top:621.0px;font-size:10.5px;color:#fff;font-weight:normal;font-family:'Liberation Sans', sans-serif;transform:scaleX(1.0185);transform-origin:0 50%;">2. Building a P&amp;L --&gt;</div>
<div class="t" style="left:397.5px;top:621.0px;font-size:10.5px;color:#444;font-weight:normal;font-family:'Liberation Sans', sans-serif;transform:scaleX(0.9685);transform-origin:0 50%;">2.1 Database</div>
<div class="b" style="left:466px;top:623.5px;width:105.4px;height:15.3px;background:#fff;border-left:1px solid #c4c4c4;border-right:1px solid #c4c4c4"></div>
<div class="b" style="left:466px;top:637.6px;width:105.4px;height:1.6px;background:#1e7145"></div>
<div class="t" style="left:476.3px;top:621.0px;font-size:10.5px;color:#2b7d4f;font-weight:normal;font-family:'Liberation Sans', sans-serif;transform:scaleX(1.0000);transform-origin:0 50%;">2.2 P&amp;L statement</div>
<svg class="s" style="left:590px;top:625px;" width="15" height="15" viewBox="0 0 15 15"><circle cx="7.5" cy="7.5" r="6" fill="none" stroke="#777" stroke-width="0.9"/><path d="M7.5 4.2 V10.8 M4.2 7.5 H10.8" stroke="#666" stroke-width="0.9"/></svg>
<div class="b" style="left:700.5px;top:627.5px;width:1.4px;height:1.4px;background:#8a8a8a;border-radius:50%"></div>
<div class="b" style="left:700.5px;top:631.0px;width:1.4px;height:1.4px;background:#8a8a8a;border-radius:50%"></div>
<div class="b" style="left:700.5px;top:634.5px;width:1.4px;height:1.4px;background:#8a8a8a;border-radius:50%"></div>
<div class="b" style="left:711.4px;top:626px;width:10.8px;height:11.8px;background:#fff;border:1px solid #b0b0b0"></div>
<svg class="s" style="left:713px;top:628px;" width="8" height="8" viewBox="0 0 8 8"><path d="M5.5 1 L2.5 4 L5.5 7 Z" fill="#222"/></svg>
<div class="b" style="left:722px;top:626px;width:400px;height:11.8px;background:#fff;border:1px solid #b8b8b8"></div>
<div class="b" style="left:1143.5px;top:626px;width:11.1px;height:11.8px;background:#fff;border:1px solid #b0b0b0"></div>
<svg class="s" style="left:1145px;top:628px;" width="8" height="8" viewBox="0 0 8 8"><path d="M2.5 1 L5.5 4 L2.5 7 Z" fill="#222"/></svg>
<div class="b" style="left:0px;top:641.3px;width:1170px;height:17px;background:#f3f3f3"></div>
<div class="b" style="left:0px;top:641.3px;width:1170px;height:0.8px;background:#dadada"></div>
<div class="t" style="left:6px;top:639.8px;font-size:9.5px;color:#444;font-weight:normal;font-family:'Liberation Sans', sans-serif;transform:scaleX(0.8550);transform-origin:0 50%;">Edit</div>
<svg class="s" style="left:42px;top:643px;" width="14" height="13" viewBox="0 0 14 13"><rect x="1" y="1.5" width="11" height="10" fill="none" stroke="#666" stroke-width="1"/><path d="M1 3.5 H12" stroke="#666" stroke-width="1.2"/><circle cx="8.5" cy="8.5" r="2.6" fill="#f3f3f3" stroke="#555" stroke-width="1"/><circle cx="8.5" cy="8.5" r="1" fill="#555"/></svg>
<svg class="s" style="left:66px;top:643px;" width="15" height="14" viewBox="0 0 15 14"><circle cx="4" cy="2.5" r="1.5" fill="none" stroke="#555" stroke-width="1"/><path d="M1 5 L7 5 M4 5 V9 L2 12.5 M4 9 L6 12.5 M7 4 L9 2" stroke="#555" stroke-width="1" fill="none"/><path d="M7.5 10 L9.5 12 L13.5 7" stroke="#555" stroke-width="1.2" fill="none"/></svg>
<div class="t" style="left:81px;top:639.8px;font-size:9.5px;color:#444;font-weight:normal;font-family:'Liberation Sans', sans-serif;transform:scaleX(0.8459);transform-origin:0 50%;">Accessibility: Good to go</div>
<svg class="s" style="left:951px;top:643px;" width="14" height="13" viewBox="0 0 14 13"><rect x="1.5" y="1.5" width="11" height="10" fill="none" stroke="#8a8a8a"/><path d="M1.5 4.8 H12.5 M1.5 8.2 H12.5 M5.2 1.5 V11.5 M8.8 1.5 V11.5" stroke="#8a8a8a" stroke-width="0.9"/></svg>
<svg class="s" style="left:982px;top:643px;" width="14" height="13" viewBox="0 0 14 13"><rect x="1.5" y="1.5" width="11" height="10" fill="none" stroke="#8a8a8a"/><rect x="4" y="3.5" width="6" height="6" fill="none" stroke="#8a8a8a" stroke-width="0.9"/></svg>
<svg class="s" style="left:1012px;top:643px;" width="14" height="13" viewBox="0 0 14 13"><path d="M1.5 1.5 V11.5 H12.5 V1.5 M5 1.5 V7 H9 V1.5" fill="none" stroke="#8a8a8a"/></svg>
<div class="b" style="left:1037.5px;top:650.2px;width:6.5px;height:0.9px;background:#9a9a9a"></div>
<div class="b" style="left:1048px;top:649.8px;width:77px;height:1.5px;background:#8f8f8f"></div>
<div class="b" style="left:1085.5px;top:647px;width:1.2px;height:7px;background:#666"></div>
<svg class="s" style="left:1127px;top:646px;" width="9" height="9" viewBox="0 0 9 9"><path d="M4.5 0.5 V8.5 M0.5 4.5 H8.5" stroke="#9a9a9a" stroke-width="0.9"/></svg>
<div class="t" style="left:1145px;top:640.0px;font-size:9px;color:#a3a3a3;font-weight:normal;font-family:'Liberation Sans', sans-serif;transform:scaleX(0.8684);transform-origin:0 50%;">120%</div>
</body></html>
